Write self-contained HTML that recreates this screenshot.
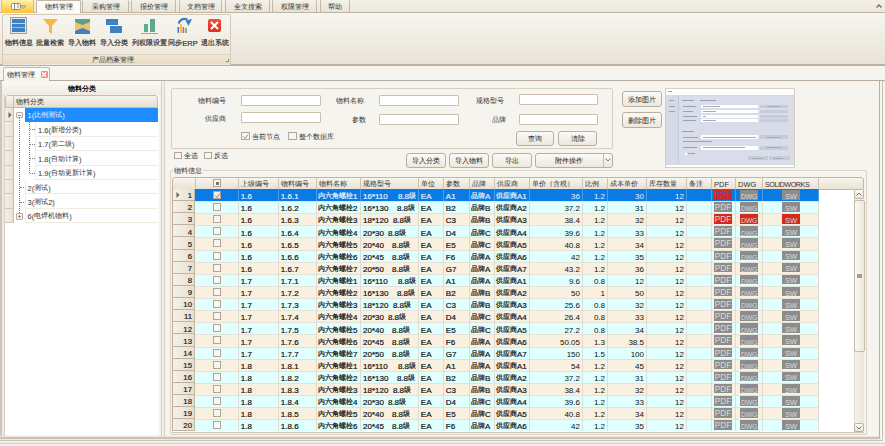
<!DOCTYPE html><html><head><meta charset="utf-8"><title>物料管理</title><style>
*{margin:0;padding:0;box-sizing:border-box}
html,body{width:885px;height:446px;overflow:hidden;background:#F6F4EF;font-family:"Liberation Sans",sans-serif;color:#222}
div{position:absolute}
svg{position:absolute}
.t{white-space:nowrap}
.z{font-size:1.333em;letter-spacing:-0.05em;line-height:0}
.g .z{font-size:1.2em}
.g,.s{-webkit-text-stroke:0.2px}
.b .z{-webkit-text-stroke:0.35px #000}
.cjk .z{font-size:0.95em;letter-spacing:0;line-height:0;position:relative;top:-1px}
.cjk .g .z{font-size:0.86em}
.cjk .b .z{-webkit-text-stroke:0}
.tab{border:1px solid #C2B6A6;border-bottom:none;border-radius:2px 2px 0 0;background:linear-gradient(#F4F1E9,#E9E3D6)}
.inp{background:#fff;border:1px solid #CDBFB0;border-radius:1px}
.btn{border:1px solid #BBAE9E;border-radius:3px;background:linear-gradient(#FBFAF6,#EDE8DC)}
.cb{width:8px;height:8px;border:1px solid #B3A595;background:#F8F6F2}
</style></head><body>
<div style="left:0px;top:0px;width:885px;height:13px;background:linear-gradient(#F3F0E8,#ECE7DB)"></div>
<div style="left:0px;top:12px;width:885px;height:1px;background:#BFB3A3"></div>
<div style="left:1px;top:0px;width:32.5px;height:12.5px;background:linear-gradient(#FDF2B0,#FFE17A 35%,#FFC43C);border-left:1px solid #CDBFA8;border-right:1px solid #C8B89A"></div>
<div style="left:11px;top:2.5px;width:9.5px;height:7.3px;background:#F4F4F4;border:1px solid #A08A50;border-radius:1.5px"></div>
<div style="left:12px;top:3.5px;width:2px;height:5.3px;background:#FFFFFF"></div>
<div style="left:14px;top:3.5px;width:1px;height:5.3px;background:#8C8C8C"></div>
<div style="left:16.5px;top:4px;width:2px;height:4.3px;background:#C8C8C8"></div>
<svg style="left:21px;top:4.5px" width="5" height="4" viewBox="0 0 5 4"><path d="M0.5 0.8H4.5L2.5 3.3Z" fill="#FFFFFF" stroke="#8A7A50" stroke-width="0.8"/></svg>
<div class="tab" style="left:36px;top:0px;width:45px;height:13px;background:#FBFAF6"></div>
<div class="t " style="left:36px;top:3.3px;line-height:10px;font-size:7.5px;color:#333;width:45px;text-align:center;"><span class="z">物料管理</span></div>
<div class="tab" style="left:82px;top:0px;width:47px;height:12px;border-top:none"></div>
<div class="t " style="left:82px;top:3.3px;line-height:10px;font-size:7.5px;color:#333;width:47px;text-align:center;"><span class="z">采购管理</span></div>
<div class="tab" style="left:131px;top:0px;width:45px;height:12px;border-top:none"></div>
<div class="t " style="left:131px;top:3.3px;line-height:10px;font-size:7.5px;color:#333;width:45px;text-align:center;"><span class="z">报价管理</span></div>
<div class="tab" style="left:179px;top:0px;width:43px;height:12px;border-top:none"></div>
<div class="t " style="left:179px;top:3.3px;line-height:10px;font-size:7.5px;color:#333;width:43px;text-align:center;"><span class="z">文档管理</span></div>
<div class="tab" style="left:225px;top:0px;width:45px;height:12px;border-top:none"></div>
<div class="t " style="left:225px;top:3.3px;line-height:10px;font-size:7.5px;color:#333;width:45px;text-align:center;"><span class="z">全文搜索</span></div>
<div class="tab" style="left:272px;top:0px;width:45px;height:12px;border-top:none"></div>
<div class="t " style="left:272px;top:3.3px;line-height:10px;font-size:7.5px;color:#333;width:45px;text-align:center;"><span class="z">权限管理</span></div>
<div class="tab" style="left:320px;top:0px;width:30px;height:12px;border-top:none"></div>
<div class="t " style="left:320px;top:3.3px;line-height:10px;font-size:7.5px;color:#333;width:30px;text-align:center;"><span class="z">帮助</span></div>
<div style="left:0px;top:13px;width:885px;height:52px;background:linear-gradient(#F7F5F0,#E9E3D6)"></div>
<div style="left:0px;top:64px;width:885px;height:1.5px;background:#BDB0A0"></div>
<div style="left:2px;top:14px;width:229px;height:51px;border:1px solid #D5CABA;border-bottom:none;border-radius:2px 2px 0 0;background:linear-gradient(#F7F5EF,#ECE7DA)"></div>
<div style="left:3px;top:54px;width:227px;height:1px;background:#DED3C2"></div>
<div style="left:3px;top:55px;width:227px;height:9px;background:linear-gradient(#F0E8D4,#E7DBC2)"></div>
<div class="t " style="left:63.4px;top:56.1px;line-height:10px;font-size:7.5px;color:#333;width:100px;text-align:center;"><span class="z">产品档案管理</span></div>
<div style="left:226px;top:59px;width:3px;height:3px;border-right:1px solid #9A8E7E;border-bottom:1px solid #9A8E7E"></div>
<div style="left:10px;top:17px;width:17px;height:17px;border:1px solid #A0A0A0;background:#E6E6E6"><div style="left:1px;top:1px;width:13px;height:13px;background:#3F7FC6"></div><div style="left:1px;top:5px;width:13px;height:1px;background:#BFD3EA"></div><div style="left:1px;top:9px;width:13px;height:1px;background:#9DBAE0"></div></div>
<svg style="left:42px;top:18px" width="17" height="17" viewBox="0 0 17 17"><path d="M1 1 H16 L10 8 V16 L7 14 V8 Z" fill="#F2B94A"/></svg>
<svg style="left:75px;top:19px" width="15" height="15" viewBox="0 0 15 15"><rect x="0" y="0" width="15" height="15" fill="#F2C264"/><path d="M0 0H15V3L7.5 6L0 3Z" fill="#5BA18D"/><path d="M0 15H15V12L7.5 9L0 12Z" fill="#3F7FC6"/></svg>
<div style="left:106px;top:19px;width:12px;height:6px;background:#3F7FC6"></div><div style="left:110px;top:26px;width:12px;height:7px;background:#3F7FC6"></div>
<div style="left:144px;top:24px;width:4px;height:8px;background:#5FA891"></div><div style="left:150px;top:19px;width:5px;height:13px;background:#5FA891"></div><div style="left:141px;top:33px;width:17px;height:1px;background:#9AA8A0"></div>
<svg style="left:176px;top:16px" width="17" height="18" viewBox="0 0 17 18"><rect x="1.5" y="11" width="1.6" height="6" fill="#3F7FC6"/><rect x="4" y="8" width="1.8" height="9" fill="#F2B94A"/><rect x="6.6" y="11" width="1.6" height="6" fill="#E0604E"/><rect x="9.2" y="12" width="1.6" height="5" fill="#5FA891"/><path d="M2.5 7.5 Q5.5 1 11.5 3.5" stroke="#3F7FC6" stroke-width="2.2" fill="none"/><path d="M9.5 4.5 L16 3 L12.5 10 Z" fill="#3F7FC6"/></svg>
<div style="left:208px;top:19px;width:13px;height:13px;background:linear-gradient(#F0503A,#D8301E);border-radius:2px"></div><svg style="left:208px;top:19px" width="13" height="13" viewBox="0 0 13 13"><path d="M3 3L10 10M10 3L3 10" stroke="#fff" stroke-width="2"/></svg>
<div class="t s" style="left:-11.2px;top:39.1px;line-height:10px;font-size:7.5px;color:#333;width:60px;text-align:center;"><span class="z">物料信息</span></div>
<div class="t s" style="left:20px;top:39.1px;line-height:10px;font-size:7.5px;color:#333;width:60px;text-align:center;"><span class="z">批量检索</span></div>
<div class="t s" style="left:52px;top:39.1px;line-height:10px;font-size:7.5px;color:#333;width:60px;text-align:center;"><span class="z">导入物料</span></div>
<div class="t s" style="left:84px;top:39.1px;line-height:10px;font-size:7.5px;color:#333;width:60px;text-align:center;"><span class="z">导入分类</span></div>
<div class="t s" style="left:119px;top:39.1px;line-height:10px;font-size:7.5px;color:#333;width:60px;text-align:center;"><span class="z">列权限设置</span></div>
<div class="t s" style="left:153px;top:39.1px;line-height:10px;font-size:7.5px;color:#333;width:60px;text-align:center;"><span class="z">同步</span>ERP</div>
<div class="t s" style="left:184.5px;top:39.1px;line-height:10px;font-size:7.5px;color:#333;width:60px;text-align:center;"><span class="z">退出系统</span></div>
<div style="left:3px;top:67px;width:47px;height:14px;border:1px solid #C3B7A7;border-bottom:none;border-radius:3px 3px 0 0;background:linear-gradient(#FDFCF9,#F4F1EA)"></div>
<div class="t " style="left:7px;top:71.3px;line-height:10px;font-size:7.5px;color:#333;"><span class="z">物料管理</span></div>
<div style="left:40.5px;top:70.5px;width:7px;height:7px;background:#F29A9A;border:1px solid #E88A8A;border-radius:1px"></div>
<svg style="left:41px;top:72px" width="6" height="5" viewBox="0 0 6 5"><path d="M1 0.5L5 4.5M5 0.5L1 4.5" stroke="#fff" stroke-width="1.2"/></svg>
<div style="left:0px;top:79.5px;width:885px;height:1.5px;background:#B9AC9C"></div>
<div style="left:4px;top:79.5px;width:45px;height:1.5px;background:#F6F3EC"></div>
<div style="left:0px;top:81px;width:1.5px;height:365px;background:#CFC5B8"></div>
<div style="left:1.5px;top:81px;width:2px;height:365px;background:#EEEAE3"></div>
<div style="left:3.5px;top:81px;width:1.5px;height:356px;background:#D9D0C4"></div>
<div style="left:878.5px;top:81px;width:1.5px;height:357px;background:#BDB0A1"></div>
<div style="left:881.5px;top:81px;width:1.5px;height:360px;background:#C9BEB0"></div>
<div style="left:0px;top:435.5px;width:879px;height:1.5px;background:#ECE8E0"></div>
<div style="left:0px;top:437px;width:880px;height:1.5px;background:#CBC1B4"></div>
<div style="left:0px;top:438.5px;width:883px;height:1.3px;background:#EEEAE3"></div>
<div style="left:0px;top:439.8px;width:883px;height:1.5px;background:#CDC3B6"></div>
<div style="left:0px;top:441.3px;width:885px;height:4.7px;background:#F3F1EC"></div>
<div style="left:0px;top:442.8px;width:885px;height:1px;background:#D8D0C4"></div>
<svg style="left:876px;top:4px" width="6" height="4" viewBox="0 0 6 4"><path d="M0.5 3.5L3 1L5.5 3.5" stroke="#7A6A5C" stroke-width="1.4" fill="none"/></svg>
<div style="left:2px;top:81px;width:159px;height:14px;background:linear-gradient(#FAF9F6,#EFEBE2)"></div>
<div class="t b" style="left:2px;top:85.1px;line-height:10px;font-size:7.5px;color:#000;width:159px;text-align:center;font-weight:bold;"><span class="z">物料分类</span></div>
<div style="left:5px;top:95px;width:154px;height:340px;background:#fff"></div>
<div style="left:161px;top:81px;width:1px;height:356px;background:#D5CCBF"></div>
<div style="left:5px;top:95px;width:153px;height:12.5px;background:linear-gradient(#F7F4EC,#E7DFCF);border:1px solid #C7BCAD;border-radius:3px 3px 0 0"></div>
<div style="left:13px;top:96px;width:1px;height:11px;background:#C7BCAD"></div>
<div class="t " style="left:16px;top:98.1px;line-height:10px;font-size:7.5px;color:#333;"><span class="z">物料分类</span></div>
<div style="left:5px;top:107.7px;width:9px;height:14.46px;background:linear-gradient(90deg,#F4F0E6,#E9E2D3);border-bottom:1px solid #D3C9B9;border-right:1px solid #C7BCAD"></div>
<div style="left:24.7px;top:107.7px;width:133.3px;height:14.46px;border-bottom:1px solid #F0ECE2;border-left:1px solid #F0ECE2;background:#1E8CFF;border-color:#1E8CFF;"></div>
<div class="t " style="left:27.5px;top:111.2px;line-height:10px;font-size:7.5px;color:#EAF3FF;">1(<span class="z">比例测试</span>)</div>
<svg style="left:8px;top:112.2px" width="4" height="6" viewBox="0 0 4 6"><path d="M0.5 0L3.5 3L0.5 6Z" fill="#6E6050"/></svg>
<div style="left:16px;top:112.1px;width:6.5px;height:6.2px;border:1px solid #B9AE9F;background:#F7F4EE;border-radius:1px"></div>
<div style="left:17.5px;top:114.7px;width:3.5px;height:1px;background:#9A8E80"></div>
<div style="left:5px;top:122.16px;width:9px;height:14.46px;background:linear-gradient(90deg,#F4F0E6,#E9E2D3);border-bottom:1px solid #D3C9B9;border-right:1px solid #C7BCAD"></div>
<div style="left:35px;top:122.16px;width:123px;height:14.46px;border-bottom:1px solid #F0ECE2;border-left:1px solid #F0ECE2;"></div>
<div class="t " style="left:38px;top:125.66px;line-height:10px;font-size:7.5px;color:#333;">1.6(<span class="z">新增分类</span>)</div>
<div style="left:5px;top:136.62px;width:9px;height:14.46px;background:linear-gradient(90deg,#F4F0E6,#E9E2D3);border-bottom:1px solid #D3C9B9;border-right:1px solid #C7BCAD"></div>
<div style="left:35px;top:136.62px;width:123px;height:14.46px;border-bottom:1px solid #F0ECE2;border-left:1px solid #F0ECE2;"></div>
<div class="t " style="left:38px;top:140.12px;line-height:10px;font-size:7.5px;color:#333;">1.7(<span class="z">第二级</span>)</div>
<div style="left:5px;top:151.08px;width:9px;height:14.46px;background:linear-gradient(90deg,#F4F0E6,#E9E2D3);border-bottom:1px solid #D3C9B9;border-right:1px solid #C7BCAD"></div>
<div style="left:35px;top:151.08px;width:123px;height:14.46px;border-bottom:1px solid #F0ECE2;border-left:1px solid #F0ECE2;"></div>
<div class="t " style="left:38px;top:154.58px;line-height:10px;font-size:7.5px;color:#333;">1.8(<span class="z">自动计算</span>)</div>
<div style="left:5px;top:165.54px;width:9px;height:14.46px;background:linear-gradient(90deg,#F4F0E6,#E9E2D3);border-bottom:1px solid #D3C9B9;border-right:1px solid #C7BCAD"></div>
<div style="left:35px;top:165.54px;width:123px;height:14.46px;border-bottom:1px solid #F0ECE2;border-left:1px solid #F0ECE2;"></div>
<div class="t " style="left:38px;top:169.04px;line-height:10px;font-size:7.5px;color:#333;">1.9(<span class="z">自动更新计算</span>)</div>
<div style="left:5px;top:180px;width:9px;height:14.46px;background:linear-gradient(90deg,#F4F0E6,#E9E2D3);border-bottom:1px solid #D3C9B9;border-right:1px solid #C7BCAD"></div>
<div style="left:24.7px;top:180px;width:133.3px;height:14.46px;border-bottom:1px solid #F0ECE2;border-left:1px solid #F0ECE2;"></div>
<div class="t " style="left:27.5px;top:183.5px;line-height:10px;font-size:7.5px;color:#333;">2(<span class="z">测试</span>)</div>
<div style="left:5px;top:194.46px;width:9px;height:14.46px;background:linear-gradient(90deg,#F4F0E6,#E9E2D3);border-bottom:1px solid #D3C9B9;border-right:1px solid #C7BCAD"></div>
<div style="left:24.7px;top:194.46px;width:133.3px;height:14.46px;border-bottom:1px solid #F0ECE2;border-left:1px solid #F0ECE2;"></div>
<div class="t " style="left:27.5px;top:197.96px;line-height:10px;font-size:7.5px;color:#333;">3(<span class="z">测试</span>2)</div>
<div style="left:5px;top:208.92px;width:9px;height:14.46px;background:linear-gradient(90deg,#F4F0E6,#E9E2D3);border-bottom:1px solid #D3C9B9;border-right:1px solid #C7BCAD"></div>
<div style="left:24.7px;top:208.92px;width:133.3px;height:14.46px;border-bottom:1px solid #F0ECE2;border-left:1px solid #F0ECE2;"></div>
<div class="t " style="left:27.5px;top:212.42px;line-height:10px;font-size:7.5px;color:#333;">6(<span class="z">电焊机物料</span>)</div>
<div style="left:16px;top:213.32px;width:6.5px;height:6.2px;border:1px solid #B9AE9F;background:#F7F4EE;border-radius:1px"></div>
<div style="left:17.5px;top:215.92px;width:3.5px;height:1px;background:#9A8E80"></div>
<div style="left:18.7px;top:214.72px;width:1px;height:3.4px;background:#9A8E80"></div>
<div style="left:19px;top:118.43px;width:1px;height:94.72px;border-left:1px dotted #7A7A7A"></div>
<div style="left:29px;top:122.16px;width:1px;height:50.61px;border-left:1px dotted #7A7A7A"></div>
<div style="left:30px;top:129.39px;width:4.5px;height:1px;border-top:1px dotted #7A7A7A"></div>
<div style="left:30px;top:143.85px;width:4.5px;height:1px;border-top:1px dotted #7A7A7A"></div>
<div style="left:30px;top:158.31px;width:4.5px;height:1px;border-top:1px dotted #7A7A7A"></div>
<div style="left:30px;top:172.77px;width:4.5px;height:1px;border-top:1px dotted #7A7A7A"></div>
<div style="left:20px;top:187.23px;width:4px;height:1px;border-top:1px dotted #7A7A7A"></div>
<div style="left:20px;top:201.69px;width:4px;height:1px;border-top:1px dotted #7A7A7A"></div>
<div style="left:162px;top:81px;width:3px;height:356px;background:#F3F0EA;border-right:1px solid #D8D0C3"></div>
<div style="left:171px;top:88px;width:442px;height:61px;border:1px solid #D9CFC1;border-radius:2px"></div>
<div class="t " style="left:145.5px;top:96.8px;line-height:10px;font-size:7.5px;color:#333;width:80px;text-align:right;"><span class="z">物料编号</span></div>
<div class="inp" style="left:241px;top:94.5px;width:80px;height:11.5px;"></div>
<div class="t " style="left:146px;top:114.8px;line-height:10px;font-size:7.5px;color:#333;width:80px;text-align:right;"><span class="z">供应商</span></div>
<div class="inp" style="left:241px;top:111.5px;width:80px;height:11.5px;"></div>
<div class="t " style="left:283.5px;top:96.8px;line-height:10px;font-size:7.5px;color:#333;width:80px;text-align:right;"><span class="z">物料名称</span></div>
<div class="inp" style="left:379px;top:94.5px;width:80px;height:11.5px;"></div>
<div class="t " style="left:286px;top:115.8px;line-height:10px;font-size:7.5px;color:#333;width:80px;text-align:right;"><span class="z">参数</span></div>
<div class="inp" style="left:379px;top:113.5px;width:80px;height:11px;"></div>
<div class="t " style="left:423.5px;top:96.8px;line-height:10px;font-size:7.5px;color:#333;width:80px;text-align:right;"><span class="z">规格型号</span></div>
<div class="inp" style="left:519px;top:93.7px;width:79px;height:11.3px;"></div>
<div class="t " style="left:426px;top:115.8px;line-height:10px;font-size:7.5px;color:#333;width:80px;text-align:right;"><span class="z">品牌</span></div>
<div class="inp" style="left:519px;top:113.5px;width:79px;height:11px;"></div>
<div class="cb" style="left:241px;top:132px;width:9px;height:8px;"></div>
<svg style="left:242px;top:133px" width="7" height="7" viewBox="0 0 7 7"><path d="M1 3.5L3 5.5L6 1.5" stroke="#9C8F80" stroke-width="1" fill="none"/></svg>
<div class="t " style="left:252px;top:132.8px;line-height:10px;font-size:7.5px;color:#333;"><span class="z">当前节点</span></div>
<div class="cb" style="left:288px;top:132px;width:9px;height:8px;"></div>
<div class="t " style="left:299px;top:132.8px;line-height:10px;font-size:7.5px;color:#333;"><span class="z">整个数据库</span></div>
<div class="btn" style="left:516px;top:131px;width:38px;height:15px;"></div>
<div class="t " style="left:516px;top:135.3px;line-height:10px;font-size:7.5px;color:#222;width:38px;text-align:center;"><span class="z">查询</span></div>
<div class="btn" style="left:558px;top:131px;width:39px;height:15px;"></div>
<div class="t " style="left:558px;top:135.3px;line-height:10px;font-size:7.5px;color:#222;width:39px;text-align:center;"><span class="z">清除</span></div>
<div class="btn" style="left:622px;top:91px;width:40px;height:15.5px;"></div>
<div class="t " style="left:622px;top:95.6px;line-height:10px;font-size:7.5px;color:#222;width:40px;text-align:center;"><span class="z">添加图片</span></div>
<div class="btn" style="left:622px;top:112px;width:40px;height:15.5px;"></div>
<div class="t " style="left:622px;top:116.6px;line-height:10px;font-size:7.5px;color:#222;width:40px;text-align:center;"><span class="z">删除图片</span></div>
<div class="cb" style="left:174px;top:152px;width:8px;height:7px;"></div>
<div class="t " style="left:184px;top:152.3px;line-height:10px;font-size:7.5px;color:#333;"><span class="z">全选</span></div>
<div class="cb" style="left:204px;top:152px;width:8px;height:7px;"></div>
<div class="t " style="left:214px;top:152.3px;line-height:10px;font-size:7.5px;color:#333;"><span class="z">反选</span></div>
<div class="btn" style="left:405.5px;top:152.5px;width:40px;height:15.5px;"></div>
<div class="t " style="left:405.5px;top:156.8px;line-height:10px;font-size:7.5px;color:#222;width:40px;text-align:center;"><span class="z">导入分类</span></div>
<div class="btn" style="left:448.5px;top:152.5px;width:40.5px;height:15.5px;"></div>
<div class="t " style="left:448.5px;top:156.8px;line-height:10px;font-size:7.5px;color:#222;width:40.5px;text-align:center;"><span class="z">导入物料</span></div>
<div class="btn" style="left:492px;top:152.5px;width:40px;height:15.5px;"></div>
<div class="t " style="left:492px;top:156.8px;line-height:10px;font-size:7.5px;color:#222;width:40px;text-align:center;"><span class="z">导出</span></div>
<div class="btn" style="left:535px;top:152.5px;width:78px;height:15.5px;"></div>
<div class="t " style="left:535px;top:156.8px;line-height:10px;font-size:7.5px;color:#222;width:68px;text-align:center;"><span class="z">附件操作</span></div>
<div style="left:602.5px;top:153.5px;width:1px;height:13.5px;background:#C9BDAE"></div>
<svg style="left:605px;top:158px" width="6" height="4" viewBox="0 0 6 4"><path d="M0.5 0.5L3 3L5.5 0.5" stroke="#777" fill="none"/></svg>
<div style="left:665px;top:88px;width:130px;height:80px;background:#FDFDFD;border:1px solid #D8CDBE"></div>
<div style="left:666px;top:95px;width:128px;height:70px;background:#D5DAE6"></div>
<div style="left:678px;top:96px;width:115px;height:68px;background:#D8DDE9;border-left:1px solid #C5CBD9"></div>
<div style="left:668px;top:91px;width:4px;height:1.3px;background:#9AA1B2"></div>
<div style="left:669px;top:100px;width:5px;height:1.3px;background:#9AA1B2"></div>
<div style="left:669px;top:105.5px;width:6px;height:1.3px;background:#9AA1B2"></div>
<div style="left:669px;top:111px;width:6px;height:1.3px;background:#9AA1B2"></div>
<div style="left:682px;top:100px;width:12px;height:1.3px;background:#9AA1B2"></div>
<div style="left:700px;top:100px;width:16px;height:1.3px;background:#9AA1B2"></div>
<div style="left:683px;top:106px;width:13px;height:1.3px;background:#9AA1B2"></div>
<div style="left:683px;top:111px;width:10px;height:1.3px;background:#9AA1B2"></div>
<div style="left:683px;top:115.5px;width:14px;height:1.3px;background:#9AA1B2"></div>
<div style="left:683px;top:120px;width:13px;height:1.3px;background:#9AA1B2"></div>
<div style="left:682px;top:130.5px;width:12px;height:1.3px;background:#9AA1B2"></div>
<div style="left:683px;top:136.5px;width:15px;height:1.3px;background:#9AA1B2"></div>
<div style="left:683px;top:141px;width:29px;height:1.3px;background:#9AA1B2"></div>
<div style="left:683px;top:147px;width:14px;height:1.3px;background:#9AA1B2"></div>
<div style="left:688px;top:153px;width:7px;height:1.3px;background:#9AA1B2"></div>
<div style="left:700.8px;top:104.8px;width:57.5px;height:3.7px;background:#FFFFFF"></div>
<div style="left:700.8px;top:110px;width:57.5px;height:3.2px;background:#FFFFFF"></div>
<div style="left:700.8px;top:114.6px;width:57.5px;height:3px;background:#FFFFFF"></div>
<div style="left:700.8px;top:118.6px;width:57.5px;height:3.4px;background:#FFFFFF"></div>
<div style="left:700.8px;top:135px;width:57.5px;height:4px;background:#FFFFFF"></div>
<div style="left:700.8px;top:145.5px;width:57.5px;height:4.1px;background:#FFFFFF"></div>
<div style="left:759.5px;top:104.8px;width:28.1px;height:3.7px;background:#C6CCDA"></div>
<div style="left:759.5px;top:110px;width:28.1px;height:3.2px;background:#C6CCDA"></div>
<div style="left:759.5px;top:114.6px;width:28.1px;height:3px;background:#C6CCDA"></div>
<div style="left:759.5px;top:118.6px;width:28.1px;height:3.4px;background:#C6CCDA"></div>
<div style="left:759.5px;top:135px;width:28.1px;height:4px;background:#C6CCDA"></div>
<div style="left:759.5px;top:145.5px;width:28.1px;height:4.1px;background:#C6CCDA"></div>
<div style="left:747.5px;top:156.3px;width:20.4px;height:4px;background:#C6CCDA"></div>
<div style="left:768.9px;top:156.3px;width:20.7px;height:4px;background:#C6CCDA"></div>
<div style="left:703px;top:106px;width:17px;height:1.2px;background:#A6ACBC"></div>
<div style="left:703px;top:111px;width:13px;height:1.2px;background:#A6ACBC"></div>
<div style="left:703px;top:115.5px;width:3px;height:1.2px;background:#A6ACBC"></div>
<div style="left:703px;top:120px;width:13px;height:1.2px;background:#A6ACBC"></div>
<div style="left:703px;top:136.5px;width:53px;height:1.2px;background:#A6ACBC"></div>
<div style="left:703px;top:147px;width:42px;height:1.2px;background:#A6ACBC"></div>
<div style="left:767px;top:106px;width:13px;height:1.2px;background:#A6ACBC"></div>
<div style="left:766px;top:136.5px;width:15px;height:1.2px;background:#A6ACBC"></div>
<div style="left:766px;top:147px;width:15px;height:1.2px;background:#A6ACBC"></div>
<div style="left:752px;top:157.8px;width:11px;height:1.2px;background:#A6ACBC"></div>
<div style="left:773px;top:157.8px;width:10px;height:1.2px;background:#A6ACBC"></div>
<div style="left:685px;top:152.5px;width:2px;height:2px;background:#FFFFFF"></div>
<div style="left:170px;top:170px;width:697px;height:265px;border:1px solid #DCD3C6;border-radius:2px"></div>
<div class="t " style="left:173px;top:167.1px;line-height:10px;font-size:7.5px;color:#333;padding:0 1px;background:#F6F4EF;"><span class="z">物料信息</span></div>
<div style="left:172px;top:177px;width:692px;height:255px;background:#fff"></div>
<div style="left:172px;top:177px;width:692px;height:12.5px;background:linear-gradient(#F8F5EE,#E9E2D3);border:1px solid #C2B5A4;border-radius:3px 3px 0 0"></div>
<div style="left:195px;top:178px;width:1px;height:11px;background:#CFC4B4"></div>
<div style="left:238px;top:178px;width:1px;height:11px;background:#CFC4B4"></div>
<div style="left:278px;top:178px;width:1px;height:11px;background:#CFC4B4"></div>
<div style="left:316px;top:178px;width:1px;height:11px;background:#CFC4B4"></div>
<div style="left:360px;top:178px;width:1px;height:11px;background:#CFC4B4"></div>
<div style="left:418px;top:178px;width:1px;height:11px;background:#CFC4B4"></div>
<div style="left:443px;top:178px;width:1px;height:11px;background:#CFC4B4"></div>
<div style="left:469px;top:178px;width:1px;height:11px;background:#CFC4B4"></div>
<div style="left:494px;top:178px;width:1px;height:11px;background:#CFC4B4"></div>
<div style="left:529px;top:178px;width:1px;height:11px;background:#CFC4B4"></div>
<div style="left:582px;top:178px;width:1px;height:11px;background:#CFC4B4"></div>
<div style="left:607px;top:178px;width:1px;height:11px;background:#CFC4B4"></div>
<div style="left:646px;top:178px;width:1px;height:11px;background:#CFC4B4"></div>
<div style="left:686px;top:178px;width:1px;height:11px;background:#CFC4B4"></div>
<div style="left:711px;top:178px;width:1px;height:11px;background:#CFC4B4"></div>
<div style="left:735px;top:178px;width:1px;height:11px;background:#CFC4B4"></div>
<div style="left:762px;top:178px;width:1px;height:11px;background:#CFC4B4"></div>
<div style="left:818px;top:178px;width:1px;height:11px;background:#CFC4B4"></div>
<div class="t " style="left:241px;top:180.1px;line-height:10px;font-size:7.5px;color:#333;"><span class="z">上级编号</span></div>
<div class="t " style="left:281px;top:180.1px;line-height:10px;font-size:7.5px;color:#333;"><span class="z">物料编号</span></div>
<div class="t " style="left:319px;top:180.1px;line-height:10px;font-size:7.5px;color:#333;"><span class="z">物料名称</span></div>
<div class="t " style="left:363px;top:180.1px;line-height:10px;font-size:7.5px;color:#333;"><span class="z">规格型号</span></div>
<div class="t " style="left:421px;top:180.1px;line-height:10px;font-size:7.5px;color:#333;"><span class="z">单位</span></div>
<div class="t " style="left:446px;top:180.1px;line-height:10px;font-size:7.5px;color:#333;"><span class="z">参数</span></div>
<div class="t " style="left:472px;top:180.1px;line-height:10px;font-size:7.5px;color:#333;"><span class="z">品牌</span></div>
<div class="t " style="left:497px;top:180.1px;line-height:10px;font-size:7.5px;color:#333;"><span class="z">供应商</span></div>
<div class="t " style="left:532px;top:180.1px;line-height:10px;font-size:7.5px;color:#333;"><span class="z">单价（含税）</span></div>
<div class="t " style="left:585px;top:180.1px;line-height:10px;font-size:7.5px;color:#333;"><span class="z">比例</span></div>
<div class="t " style="left:610px;top:180.1px;line-height:10px;font-size:7.5px;color:#333;"><span class="z">成本单价</span></div>
<div class="t " style="left:649px;top:180.1px;line-height:10px;font-size:7.5px;color:#333;"><span class="z">库存数量</span></div>
<div class="t " style="left:689px;top:180.1px;line-height:10px;font-size:7.5px;color:#333;"><span class="z">备注</span></div>
<div class="t " style="left:714px;top:180.1px;line-height:10px;font-size:7.5px;color:#333;">PDF</div>
<div class="t " style="left:738px;top:180.1px;line-height:10px;font-size:7.5px;color:#333;">DWG</div>
<div class="t " style="left:765px;top:180.1px;line-height:10px;font-size:7.2px;color:#333;letter-spacing:-0.45px;">SOLIDWORKS</div>
<div class="cb" style="left:213px;top:179px;width:8px;height:8px;"></div>
<div style="left:215.5px;top:181.5px;width:3px;height:3px;background:#8C6E5E"></div>
<div style="left:172px;top:189px;width:23px;height:12.12px;background:linear-gradient(90deg,#F5F1E8,#E8E0D0);border-left:1px solid #B8AB9C;border-bottom:1px solid #BFB2A2;border-right:1px solid #C2B5A4"></div>
<div class="t s" style="left:172px;top:191.2px;line-height:10px;font-size:7.8px;color:#222;width:20px;text-align:right;">1</div>
<svg style="left:176px;top:192.2px" width="4" height="6" viewBox="0 0 4 6"><path d="M0.5 0L3.5 3L0.5 6Z" fill="#6E6050"/></svg>
<div style="left:195px;top:189px;width:623px;height:12.12px;background:#0A7AE4;border-top:1px solid #0A7AE4"></div>
<div style="left:317px;top:189px;width:44px;height:12.12px;background:#0A7AE4"></div>
<div style="left:238px;top:189px;width:1px;height:12.12px;background:#4A9EEC"></div>
<div style="left:278px;top:189px;width:1px;height:12.12px;background:#4A9EEC"></div>
<div style="left:316px;top:189px;width:1px;height:12.12px;background:#4A9EEC"></div>
<div style="left:360px;top:189px;width:1px;height:12.12px;background:#4A9EEC"></div>
<div style="left:418px;top:189px;width:1px;height:12.12px;background:#4A9EEC"></div>
<div style="left:443px;top:189px;width:1px;height:12.12px;background:#4A9EEC"></div>
<div style="left:469px;top:189px;width:1px;height:12.12px;background:#4A9EEC"></div>
<div style="left:494px;top:189px;width:1px;height:12.12px;background:#4A9EEC"></div>
<div style="left:529px;top:189px;width:1px;height:12.12px;background:#4A9EEC"></div>
<div style="left:582px;top:189px;width:1px;height:12.12px;background:#4A9EEC"></div>
<div style="left:607px;top:189px;width:1px;height:12.12px;background:#4A9EEC"></div>
<div style="left:646px;top:189px;width:1px;height:12.12px;background:#4A9EEC"></div>
<div style="left:686px;top:189px;width:1px;height:12.12px;background:#4A9EEC"></div>
<div style="left:711px;top:189px;width:1px;height:12.12px;background:#4A9EEC"></div>
<div style="left:735px;top:189px;width:1px;height:12.12px;background:#4A9EEC"></div>
<div style="left:762px;top:189px;width:1px;height:12.12px;background:#4A9EEC"></div>
<div style="left:818px;top:189px;width:1px;height:12.12px;background:#4A9EEC"></div>
<div class="cb" style="left:213px;top:191px;width:8px;height:8px;background:#F4F0EA"></div>
<svg style="left:214px;top:192px" width="7" height="7" viewBox="0 0 7 7"><path d="M1 3.5L3 5.5L6 1.5" stroke="#8C7E6E" stroke-width="1" fill="none"/></svg>
<div class="t g" style="left:240.8px;top:192.2px;line-height:10px;font-size:8px;color:#E6F0FF;">1.6</div>
<div class="t g" style="left:280.8px;top:192.2px;line-height:10px;font-size:8px;color:#E6F0FF;">1.6.1</div>
<div class="t g" style="left:318px;top:192.2px;line-height:10px;font-size:8px;color:#E6F0FF;"><span class="z">内六角螺栓</span>1</div>
<div class="t g" style="left:420.8px;top:192.2px;line-height:10px;font-size:8px;color:#E6F0FF;">EA</div>
<div class="t g" style="left:445.8px;top:192.2px;line-height:10px;font-size:8px;color:#E6F0FF;">A1</div>
<div class="t g" style="left:471px;top:192.2px;line-height:10px;font-size:8px;color:#E6F0FF;"><span class="z">品牌</span>A</div>
<div class="t g" style="left:496px;top:192.2px;line-height:10px;font-size:8px;color:#E6F0FF;"><span class="z">供应商</span>A1</div>
<div class="t g" style="left:363px;top:192.2px;line-height:10px;font-size:8px;color:#E6F0FF;">16*110</div>
<div class="t g" style="left:379px;top:192.2px;line-height:10px;font-size:8px;color:#E6F0FF;width:37px;text-align:right;">8.8<span class="z">级</span></div>
<div class="t " style="left:540px;top:192.2px;line-height:10px;font-size:8px;color:#E6F0FF;width:40px;text-align:right;">36</div>
<div class="t " style="left:565px;top:192.2px;line-height:10px;font-size:8px;color:#E6F0FF;width:40px;text-align:right;">1.2</div>
<div class="t " style="left:604px;top:192.2px;line-height:10px;font-size:8px;color:#E6F0FF;width:40px;text-align:right;">30</div>
<div class="t " style="left:644px;top:192.2px;line-height:10px;font-size:8px;color:#E6F0FF;width:40px;text-align:right;">12</div>
<div style="left:714px;top:190px;width:18px;height:9.5px;background:#D8281A"></div>
<div class="t " style="left:713px;top:191px;line-height:10px;font-size:8.2px;color:#4A58C0;width:20px;text-align:center;">PDF</div>
<div style="left:740px;top:190px;width:18px;height:9.5px;background:#8C8C8C"></div>
<div class="t " style="left:737px;top:192.2px;line-height:10px;font-size:6.8px;color:#D8D8D8;width:24px;text-align:center;letter-spacing:-0.2px;">DWG</div>
<div style="left:782px;top:190px;width:18px;height:9.5px;background:#8C8C8C"></div>
<div class="t " style="left:782px;top:191.6px;line-height:10px;font-size:7.5px;color:#DCDCDC;width:18px;text-align:center;">SW</div>
<div style="left:172px;top:201.12px;width:23px;height:12.12px;background:linear-gradient(90deg,#F5F1E8,#E8E0D0);border-left:1px solid #B8AB9C;border-bottom:1px solid #BFB2A2;border-right:1px solid #C2B5A4"></div>
<div class="t s" style="left:172px;top:203.32px;line-height:10px;font-size:7.8px;color:#222;width:20px;text-align:right;">2</div>
<div style="left:195px;top:201.12px;width:623px;height:12.12px;background:#E0FFFF;border-top:1px solid #E6E2DA"></div>
<div style="left:238px;top:201.12px;width:1px;height:12.12px;background:#E0DCD4"></div>
<div style="left:278px;top:201.12px;width:1px;height:12.12px;background:#E0DCD4"></div>
<div style="left:316px;top:201.12px;width:1px;height:12.12px;background:#E0DCD4"></div>
<div style="left:360px;top:201.12px;width:1px;height:12.12px;background:#E0DCD4"></div>
<div style="left:418px;top:201.12px;width:1px;height:12.12px;background:#E0DCD4"></div>
<div style="left:443px;top:201.12px;width:1px;height:12.12px;background:#E0DCD4"></div>
<div style="left:469px;top:201.12px;width:1px;height:12.12px;background:#E0DCD4"></div>
<div style="left:494px;top:201.12px;width:1px;height:12.12px;background:#E0DCD4"></div>
<div style="left:529px;top:201.12px;width:1px;height:12.12px;background:#E0DCD4"></div>
<div style="left:582px;top:201.12px;width:1px;height:12.12px;background:#E0DCD4"></div>
<div style="left:607px;top:201.12px;width:1px;height:12.12px;background:#E0DCD4"></div>
<div style="left:646px;top:201.12px;width:1px;height:12.12px;background:#E0DCD4"></div>
<div style="left:686px;top:201.12px;width:1px;height:12.12px;background:#E0DCD4"></div>
<div style="left:711px;top:201.12px;width:1px;height:12.12px;background:#E0DCD4"></div>
<div style="left:735px;top:201.12px;width:1px;height:12.12px;background:#E0DCD4"></div>
<div style="left:762px;top:201.12px;width:1px;height:12.12px;background:#E0DCD4"></div>
<div style="left:818px;top:201.12px;width:1px;height:12.12px;background:#E0DCD4"></div>
<div class="cb" style="left:213px;top:203.12px;width:8px;height:8px;"></div>
<div class="t g" style="left:240.8px;top:204.32px;line-height:10px;font-size:8px;color:#111;">1.6</div>
<div class="t g" style="left:280.8px;top:204.32px;line-height:10px;font-size:8px;color:#111;">1.6.2</div>
<div class="t g" style="left:318px;top:204.32px;line-height:10px;font-size:8px;color:#111;"><span class="z">内六角螺栓</span>2</div>
<div class="t g" style="left:420.8px;top:204.32px;line-height:10px;font-size:8px;color:#111;">EA</div>
<div class="t g" style="left:445.8px;top:204.32px;line-height:10px;font-size:8px;color:#111;">B2</div>
<div class="t g" style="left:471px;top:204.32px;line-height:10px;font-size:8px;color:#111;"><span class="z">品牌</span>B</div>
<div class="t g" style="left:496px;top:204.32px;line-height:10px;font-size:8px;color:#111;"><span class="z">供应商</span>A2</div>
<div class="t g" style="left:363px;top:204.32px;line-height:10px;font-size:8px;color:#111;">16*130</div>
<div class="t g" style="left:378px;top:204.32px;line-height:10px;font-size:8px;color:#111;width:37px;text-align:right;">8.8<span class="z">级</span></div>
<div class="t " style="left:540px;top:204.32px;line-height:10px;font-size:8px;color:#111;width:40px;text-align:right;">37.2</div>
<div class="t " style="left:565px;top:204.32px;line-height:10px;font-size:8px;color:#111;width:40px;text-align:right;">1.2</div>
<div class="t " style="left:604px;top:204.32px;line-height:10px;font-size:8px;color:#111;width:40px;text-align:right;">31</div>
<div class="t " style="left:644px;top:204.32px;line-height:10px;font-size:8px;color:#111;width:40px;text-align:right;">12</div>
<div style="left:714px;top:202.12px;width:18px;height:9.5px;background:#8C8C8C"></div>
<div class="t " style="left:713px;top:203.12px;line-height:10px;font-size:8.2px;color:#DCDCDC;width:20px;text-align:center;">PDF</div>
<div style="left:740px;top:202.12px;width:18px;height:9.5px;background:#8C8C8C"></div>
<div class="t " style="left:737px;top:204.32px;line-height:10px;font-size:6.8px;color:#D8D8D8;width:24px;text-align:center;letter-spacing:-0.2px;">DWG</div>
<div style="left:782px;top:202.12px;width:18px;height:9.5px;background:#8C8C8C"></div>
<div class="t " style="left:782px;top:203.72px;line-height:10px;font-size:7.5px;color:#DCDCDC;width:18px;text-align:center;">SW</div>
<div style="left:172px;top:213.24px;width:23px;height:12.12px;background:linear-gradient(90deg,#F5F1E8,#E8E0D0);border-left:1px solid #B8AB9C;border-bottom:1px solid #BFB2A2;border-right:1px solid #C2B5A4"></div>
<div class="t s" style="left:172px;top:215.44px;line-height:10px;font-size:7.8px;color:#222;width:20px;text-align:right;">3</div>
<div style="left:195px;top:213.24px;width:623px;height:12.12px;background:#FAF0DF;border-top:1px solid #E6E2DA"></div>
<div style="left:238px;top:213.24px;width:1px;height:12.12px;background:#E0DCD4"></div>
<div style="left:278px;top:213.24px;width:1px;height:12.12px;background:#E0DCD4"></div>
<div style="left:316px;top:213.24px;width:1px;height:12.12px;background:#E0DCD4"></div>
<div style="left:360px;top:213.24px;width:1px;height:12.12px;background:#E0DCD4"></div>
<div style="left:418px;top:213.24px;width:1px;height:12.12px;background:#E0DCD4"></div>
<div style="left:443px;top:213.24px;width:1px;height:12.12px;background:#E0DCD4"></div>
<div style="left:469px;top:213.24px;width:1px;height:12.12px;background:#E0DCD4"></div>
<div style="left:494px;top:213.24px;width:1px;height:12.12px;background:#E0DCD4"></div>
<div style="left:529px;top:213.24px;width:1px;height:12.12px;background:#E0DCD4"></div>
<div style="left:582px;top:213.24px;width:1px;height:12.12px;background:#E0DCD4"></div>
<div style="left:607px;top:213.24px;width:1px;height:12.12px;background:#E0DCD4"></div>
<div style="left:646px;top:213.24px;width:1px;height:12.12px;background:#E0DCD4"></div>
<div style="left:686px;top:213.24px;width:1px;height:12.12px;background:#E0DCD4"></div>
<div style="left:711px;top:213.24px;width:1px;height:12.12px;background:#E0DCD4"></div>
<div style="left:735px;top:213.24px;width:1px;height:12.12px;background:#E0DCD4"></div>
<div style="left:762px;top:213.24px;width:1px;height:12.12px;background:#E0DCD4"></div>
<div style="left:818px;top:213.24px;width:1px;height:12.12px;background:#E0DCD4"></div>
<div class="cb" style="left:213px;top:215.24px;width:8px;height:8px;"></div>
<div class="t g" style="left:240.8px;top:216.44px;line-height:10px;font-size:8px;color:#111;">1.6</div>
<div class="t g" style="left:280.8px;top:216.44px;line-height:10px;font-size:8px;color:#111;">1.6.3</div>
<div class="t g" style="left:318px;top:216.44px;line-height:10px;font-size:8px;color:#111;"><span class="z">内六角螺栓</span>3</div>
<div class="t g" style="left:420.8px;top:216.44px;line-height:10px;font-size:8px;color:#111;">EA</div>
<div class="t g" style="left:445.8px;top:216.44px;line-height:10px;font-size:8px;color:#111;">C3</div>
<div class="t g" style="left:471px;top:216.44px;line-height:10px;font-size:8px;color:#111;"><span class="z">品牌</span>B</div>
<div class="t g" style="left:496px;top:216.44px;line-height:10px;font-size:8px;color:#111;"><span class="z">供应商</span>A3</div>
<div class="t g" style="left:363px;top:216.44px;line-height:10px;font-size:8px;color:#111;">18*120</div>
<div class="t g" style="left:374px;top:216.44px;line-height:10px;font-size:8px;color:#111;width:37px;text-align:right;">8.8<span class="z">级</span></div>
<div class="t " style="left:540px;top:216.44px;line-height:10px;font-size:8px;color:#111;width:40px;text-align:right;">38.4</div>
<div class="t " style="left:565px;top:216.44px;line-height:10px;font-size:8px;color:#111;width:40px;text-align:right;">1.2</div>
<div class="t " style="left:604px;top:216.44px;line-height:10px;font-size:8px;color:#111;width:40px;text-align:right;">32</div>
<div class="t " style="left:644px;top:216.44px;line-height:10px;font-size:8px;color:#111;width:40px;text-align:right;">12</div>
<div style="left:714px;top:214.24px;width:18px;height:9.5px;background:#D8281A"></div>
<div class="t " style="left:713px;top:215.24px;line-height:10px;font-size:8.2px;color:#DCDCDC;width:20px;text-align:center;">PDF</div>
<div style="left:740px;top:214.24px;width:18px;height:9.5px;background:#D8281A"></div>
<div class="t " style="left:737px;top:216.44px;line-height:10px;font-size:6.8px;color:#D8D8D8;width:24px;text-align:center;letter-spacing:-0.2px;">DWG</div>
<div style="left:782px;top:214.24px;width:18px;height:9.5px;background:#D8281A"></div>
<div class="t " style="left:782px;top:215.84px;line-height:10px;font-size:7.5px;color:#DCDCDC;width:18px;text-align:center;">SW</div>
<div style="left:172px;top:225.36px;width:23px;height:12.12px;background:linear-gradient(90deg,#F5F1E8,#E8E0D0);border-left:1px solid #B8AB9C;border-bottom:1px solid #BFB2A2;border-right:1px solid #C2B5A4"></div>
<div class="t s" style="left:172px;top:227.56px;line-height:10px;font-size:7.8px;color:#222;width:20px;text-align:right;">4</div>
<div style="left:195px;top:225.36px;width:623px;height:12.12px;background:#E0FFFF;border-top:1px solid #E6E2DA"></div>
<div style="left:238px;top:225.36px;width:1px;height:12.12px;background:#E0DCD4"></div>
<div style="left:278px;top:225.36px;width:1px;height:12.12px;background:#E0DCD4"></div>
<div style="left:316px;top:225.36px;width:1px;height:12.12px;background:#E0DCD4"></div>
<div style="left:360px;top:225.36px;width:1px;height:12.12px;background:#E0DCD4"></div>
<div style="left:418px;top:225.36px;width:1px;height:12.12px;background:#E0DCD4"></div>
<div style="left:443px;top:225.36px;width:1px;height:12.12px;background:#E0DCD4"></div>
<div style="left:469px;top:225.36px;width:1px;height:12.12px;background:#E0DCD4"></div>
<div style="left:494px;top:225.36px;width:1px;height:12.12px;background:#E0DCD4"></div>
<div style="left:529px;top:225.36px;width:1px;height:12.12px;background:#E0DCD4"></div>
<div style="left:582px;top:225.36px;width:1px;height:12.12px;background:#E0DCD4"></div>
<div style="left:607px;top:225.36px;width:1px;height:12.12px;background:#E0DCD4"></div>
<div style="left:646px;top:225.36px;width:1px;height:12.12px;background:#E0DCD4"></div>
<div style="left:686px;top:225.36px;width:1px;height:12.12px;background:#E0DCD4"></div>
<div style="left:711px;top:225.36px;width:1px;height:12.12px;background:#E0DCD4"></div>
<div style="left:735px;top:225.36px;width:1px;height:12.12px;background:#E0DCD4"></div>
<div style="left:762px;top:225.36px;width:1px;height:12.12px;background:#E0DCD4"></div>
<div style="left:818px;top:225.36px;width:1px;height:12.12px;background:#E0DCD4"></div>
<div class="cb" style="left:213px;top:227.36px;width:8px;height:8px;"></div>
<div class="t g" style="left:240.8px;top:228.56px;line-height:10px;font-size:8px;color:#111;">1.6</div>
<div class="t g" style="left:280.8px;top:228.56px;line-height:10px;font-size:8px;color:#111;">1.6.4</div>
<div class="t g" style="left:318px;top:228.56px;line-height:10px;font-size:8px;color:#111;"><span class="z">内六角螺栓</span>4</div>
<div class="t g" style="left:420.8px;top:228.56px;line-height:10px;font-size:8px;color:#111;">EA</div>
<div class="t g" style="left:445.8px;top:228.56px;line-height:10px;font-size:8px;color:#111;">D4</div>
<div class="t g" style="left:471px;top:228.56px;line-height:10px;font-size:8px;color:#111;"><span class="z">品牌</span>C</div>
<div class="t g" style="left:496px;top:228.56px;line-height:10px;font-size:8px;color:#111;"><span class="z">供应商</span>A4</div>
<div class="t g" style="left:363px;top:228.56px;line-height:10px;font-size:8px;color:#111;">20*30</div>
<div class="t g" style="left:369px;top:228.56px;line-height:10px;font-size:8px;color:#111;width:37px;text-align:right;">8.8<span class="z">级</span></div>
<div class="t " style="left:540px;top:228.56px;line-height:10px;font-size:8px;color:#111;width:40px;text-align:right;">39.6</div>
<div class="t " style="left:565px;top:228.56px;line-height:10px;font-size:8px;color:#111;width:40px;text-align:right;">1.2</div>
<div class="t " style="left:604px;top:228.56px;line-height:10px;font-size:8px;color:#111;width:40px;text-align:right;">33</div>
<div class="t " style="left:644px;top:228.56px;line-height:10px;font-size:8px;color:#111;width:40px;text-align:right;">12</div>
<div style="left:714px;top:226.36px;width:18px;height:9.5px;background:#8C8C8C"></div>
<div class="t " style="left:713px;top:227.36px;line-height:10px;font-size:8.2px;color:#DCDCDC;width:20px;text-align:center;">PDF</div>
<div style="left:740px;top:226.36px;width:18px;height:9.5px;background:#8C8C8C"></div>
<div class="t " style="left:737px;top:228.56px;line-height:10px;font-size:6.8px;color:#D8D8D8;width:24px;text-align:center;letter-spacing:-0.2px;">DWG</div>
<div style="left:782px;top:226.36px;width:18px;height:9.5px;background:#8C8C8C"></div>
<div class="t " style="left:782px;top:227.96px;line-height:10px;font-size:7.5px;color:#DCDCDC;width:18px;text-align:center;">SW</div>
<div style="left:172px;top:237.48px;width:23px;height:12.12px;background:linear-gradient(90deg,#F5F1E8,#E8E0D0);border-left:1px solid #B8AB9C;border-bottom:1px solid #BFB2A2;border-right:1px solid #C2B5A4"></div>
<div class="t s" style="left:172px;top:239.68px;line-height:10px;font-size:7.8px;color:#222;width:20px;text-align:right;">5</div>
<div style="left:195px;top:237.48px;width:623px;height:12.12px;background:#FAF0DF;border-top:1px solid #E6E2DA"></div>
<div style="left:238px;top:237.48px;width:1px;height:12.12px;background:#E0DCD4"></div>
<div style="left:278px;top:237.48px;width:1px;height:12.12px;background:#E0DCD4"></div>
<div style="left:316px;top:237.48px;width:1px;height:12.12px;background:#E0DCD4"></div>
<div style="left:360px;top:237.48px;width:1px;height:12.12px;background:#E0DCD4"></div>
<div style="left:418px;top:237.48px;width:1px;height:12.12px;background:#E0DCD4"></div>
<div style="left:443px;top:237.48px;width:1px;height:12.12px;background:#E0DCD4"></div>
<div style="left:469px;top:237.48px;width:1px;height:12.12px;background:#E0DCD4"></div>
<div style="left:494px;top:237.48px;width:1px;height:12.12px;background:#E0DCD4"></div>
<div style="left:529px;top:237.48px;width:1px;height:12.12px;background:#E0DCD4"></div>
<div style="left:582px;top:237.48px;width:1px;height:12.12px;background:#E0DCD4"></div>
<div style="left:607px;top:237.48px;width:1px;height:12.12px;background:#E0DCD4"></div>
<div style="left:646px;top:237.48px;width:1px;height:12.12px;background:#E0DCD4"></div>
<div style="left:686px;top:237.48px;width:1px;height:12.12px;background:#E0DCD4"></div>
<div style="left:711px;top:237.48px;width:1px;height:12.12px;background:#E0DCD4"></div>
<div style="left:735px;top:237.48px;width:1px;height:12.12px;background:#E0DCD4"></div>
<div style="left:762px;top:237.48px;width:1px;height:12.12px;background:#E0DCD4"></div>
<div style="left:818px;top:237.48px;width:1px;height:12.12px;background:#E0DCD4"></div>
<div class="cb" style="left:213px;top:239.48px;width:8px;height:8px;"></div>
<div class="t g" style="left:240.8px;top:240.68px;line-height:10px;font-size:8px;color:#111;">1.6</div>
<div class="t g" style="left:280.8px;top:240.68px;line-height:10px;font-size:8px;color:#111;">1.6.5</div>
<div class="t g" style="left:318px;top:240.68px;line-height:10px;font-size:8px;color:#111;"><span class="z">内六角螺栓</span>5</div>
<div class="t g" style="left:420.8px;top:240.68px;line-height:10px;font-size:8px;color:#111;">EA</div>
<div class="t g" style="left:445.8px;top:240.68px;line-height:10px;font-size:8px;color:#111;">E5</div>
<div class="t g" style="left:471px;top:240.68px;line-height:10px;font-size:8px;color:#111;"><span class="z">品牌</span>C</div>
<div class="t g" style="left:496px;top:240.68px;line-height:10px;font-size:8px;color:#111;"><span class="z">供应商</span>A5</div>
<div class="t g" style="left:363px;top:240.68px;line-height:10px;font-size:8px;color:#111;">20*40</div>
<div class="t g" style="left:373px;top:240.68px;line-height:10px;font-size:8px;color:#111;width:37px;text-align:right;">8.8<span class="z">级</span></div>
<div class="t " style="left:540px;top:240.68px;line-height:10px;font-size:8px;color:#111;width:40px;text-align:right;">40.8</div>
<div class="t " style="left:565px;top:240.68px;line-height:10px;font-size:8px;color:#111;width:40px;text-align:right;">1.2</div>
<div class="t " style="left:604px;top:240.68px;line-height:10px;font-size:8px;color:#111;width:40px;text-align:right;">34</div>
<div class="t " style="left:644px;top:240.68px;line-height:10px;font-size:8px;color:#111;width:40px;text-align:right;">12</div>
<div style="left:714px;top:238.48px;width:18px;height:9.5px;background:#8C8C8C"></div>
<div class="t " style="left:713px;top:239.48px;line-height:10px;font-size:8.2px;color:#DCDCDC;width:20px;text-align:center;">PDF</div>
<div style="left:740px;top:238.48px;width:18px;height:9.5px;background:#8C8C8C"></div>
<div class="t " style="left:737px;top:240.68px;line-height:10px;font-size:6.8px;color:#D8D8D8;width:24px;text-align:center;letter-spacing:-0.2px;">DWG</div>
<div style="left:782px;top:238.48px;width:18px;height:9.5px;background:#8C8C8C"></div>
<div class="t " style="left:782px;top:240.08px;line-height:10px;font-size:7.5px;color:#DCDCDC;width:18px;text-align:center;">SW</div>
<div style="left:172px;top:249.6px;width:23px;height:12.12px;background:linear-gradient(90deg,#F5F1E8,#E8E0D0);border-left:1px solid #B8AB9C;border-bottom:1px solid #BFB2A2;border-right:1px solid #C2B5A4"></div>
<div class="t s" style="left:172px;top:251.8px;line-height:10px;font-size:7.8px;color:#222;width:20px;text-align:right;">6</div>
<div style="left:195px;top:249.6px;width:623px;height:12.12px;background:#E0FFFF;border-top:1px solid #E6E2DA"></div>
<div style="left:238px;top:249.6px;width:1px;height:12.12px;background:#E0DCD4"></div>
<div style="left:278px;top:249.6px;width:1px;height:12.12px;background:#E0DCD4"></div>
<div style="left:316px;top:249.6px;width:1px;height:12.12px;background:#E0DCD4"></div>
<div style="left:360px;top:249.6px;width:1px;height:12.12px;background:#E0DCD4"></div>
<div style="left:418px;top:249.6px;width:1px;height:12.12px;background:#E0DCD4"></div>
<div style="left:443px;top:249.6px;width:1px;height:12.12px;background:#E0DCD4"></div>
<div style="left:469px;top:249.6px;width:1px;height:12.12px;background:#E0DCD4"></div>
<div style="left:494px;top:249.6px;width:1px;height:12.12px;background:#E0DCD4"></div>
<div style="left:529px;top:249.6px;width:1px;height:12.12px;background:#E0DCD4"></div>
<div style="left:582px;top:249.6px;width:1px;height:12.12px;background:#E0DCD4"></div>
<div style="left:607px;top:249.6px;width:1px;height:12.12px;background:#E0DCD4"></div>
<div style="left:646px;top:249.6px;width:1px;height:12.12px;background:#E0DCD4"></div>
<div style="left:686px;top:249.6px;width:1px;height:12.12px;background:#E0DCD4"></div>
<div style="left:711px;top:249.6px;width:1px;height:12.12px;background:#E0DCD4"></div>
<div style="left:735px;top:249.6px;width:1px;height:12.12px;background:#E0DCD4"></div>
<div style="left:762px;top:249.6px;width:1px;height:12.12px;background:#E0DCD4"></div>
<div style="left:818px;top:249.6px;width:1px;height:12.12px;background:#E0DCD4"></div>
<div class="cb" style="left:213px;top:251.6px;width:8px;height:8px;"></div>
<div class="t g" style="left:240.8px;top:252.8px;line-height:10px;font-size:8px;color:#111;">1.6</div>
<div class="t g" style="left:280.8px;top:252.8px;line-height:10px;font-size:8px;color:#111;">1.6.6</div>
<div class="t g" style="left:318px;top:252.8px;line-height:10px;font-size:8px;color:#111;"><span class="z">内六角螺栓</span>6</div>
<div class="t g" style="left:420.8px;top:252.8px;line-height:10px;font-size:8px;color:#111;">EA</div>
<div class="t g" style="left:445.8px;top:252.8px;line-height:10px;font-size:8px;color:#111;">F6</div>
<div class="t g" style="left:471px;top:252.8px;line-height:10px;font-size:8px;color:#111;"><span class="z">品牌</span>A</div>
<div class="t g" style="left:496px;top:252.8px;line-height:10px;font-size:8px;color:#111;"><span class="z">供应商</span>A6</div>
<div class="t g" style="left:363px;top:252.8px;line-height:10px;font-size:8px;color:#111;">20*45</div>
<div class="t g" style="left:373px;top:252.8px;line-height:10px;font-size:8px;color:#111;width:37px;text-align:right;">8.8<span class="z">级</span></div>
<div class="t " style="left:540px;top:252.8px;line-height:10px;font-size:8px;color:#111;width:40px;text-align:right;">42</div>
<div class="t " style="left:565px;top:252.8px;line-height:10px;font-size:8px;color:#111;width:40px;text-align:right;">1.2</div>
<div class="t " style="left:604px;top:252.8px;line-height:10px;font-size:8px;color:#111;width:40px;text-align:right;">35</div>
<div class="t " style="left:644px;top:252.8px;line-height:10px;font-size:8px;color:#111;width:40px;text-align:right;">12</div>
<div style="left:714px;top:250.6px;width:18px;height:9.5px;background:#8C8C8C"></div>
<div class="t " style="left:713px;top:251.6px;line-height:10px;font-size:8.2px;color:#DCDCDC;width:20px;text-align:center;">PDF</div>
<div style="left:740px;top:250.6px;width:18px;height:9.5px;background:#8C8C8C"></div>
<div class="t " style="left:737px;top:252.8px;line-height:10px;font-size:6.8px;color:#D8D8D8;width:24px;text-align:center;letter-spacing:-0.2px;">DWG</div>
<div style="left:782px;top:250.6px;width:18px;height:9.5px;background:#8C8C8C"></div>
<div class="t " style="left:782px;top:252.2px;line-height:10px;font-size:7.5px;color:#DCDCDC;width:18px;text-align:center;">SW</div>
<div style="left:172px;top:261.72px;width:23px;height:12.12px;background:linear-gradient(90deg,#F5F1E8,#E8E0D0);border-left:1px solid #B8AB9C;border-bottom:1px solid #BFB2A2;border-right:1px solid #C2B5A4"></div>
<div class="t s" style="left:172px;top:263.92px;line-height:10px;font-size:7.8px;color:#222;width:20px;text-align:right;">7</div>
<div style="left:195px;top:261.72px;width:623px;height:12.12px;background:#FAF0DF;border-top:1px solid #E6E2DA"></div>
<div style="left:238px;top:261.72px;width:1px;height:12.12px;background:#E0DCD4"></div>
<div style="left:278px;top:261.72px;width:1px;height:12.12px;background:#E0DCD4"></div>
<div style="left:316px;top:261.72px;width:1px;height:12.12px;background:#E0DCD4"></div>
<div style="left:360px;top:261.72px;width:1px;height:12.12px;background:#E0DCD4"></div>
<div style="left:418px;top:261.72px;width:1px;height:12.12px;background:#E0DCD4"></div>
<div style="left:443px;top:261.72px;width:1px;height:12.12px;background:#E0DCD4"></div>
<div style="left:469px;top:261.72px;width:1px;height:12.12px;background:#E0DCD4"></div>
<div style="left:494px;top:261.72px;width:1px;height:12.12px;background:#E0DCD4"></div>
<div style="left:529px;top:261.72px;width:1px;height:12.12px;background:#E0DCD4"></div>
<div style="left:582px;top:261.72px;width:1px;height:12.12px;background:#E0DCD4"></div>
<div style="left:607px;top:261.72px;width:1px;height:12.12px;background:#E0DCD4"></div>
<div style="left:646px;top:261.72px;width:1px;height:12.12px;background:#E0DCD4"></div>
<div style="left:686px;top:261.72px;width:1px;height:12.12px;background:#E0DCD4"></div>
<div style="left:711px;top:261.72px;width:1px;height:12.12px;background:#E0DCD4"></div>
<div style="left:735px;top:261.72px;width:1px;height:12.12px;background:#E0DCD4"></div>
<div style="left:762px;top:261.72px;width:1px;height:12.12px;background:#E0DCD4"></div>
<div style="left:818px;top:261.72px;width:1px;height:12.12px;background:#E0DCD4"></div>
<div class="cb" style="left:213px;top:263.72px;width:8px;height:8px;"></div>
<div class="t g" style="left:240.8px;top:264.92px;line-height:10px;font-size:8px;color:#111;">1.6</div>
<div class="t g" style="left:280.8px;top:264.92px;line-height:10px;font-size:8px;color:#111;">1.6.7</div>
<div class="t g" style="left:318px;top:264.92px;line-height:10px;font-size:8px;color:#111;"><span class="z">内六角螺栓</span>7</div>
<div class="t g" style="left:420.8px;top:264.92px;line-height:10px;font-size:8px;color:#111;">EA</div>
<div class="t g" style="left:445.8px;top:264.92px;line-height:10px;font-size:8px;color:#111;">G7</div>
<div class="t g" style="left:471px;top:264.92px;line-height:10px;font-size:8px;color:#111;"><span class="z">品牌</span>A</div>
<div class="t g" style="left:496px;top:264.92px;line-height:10px;font-size:8px;color:#111;"><span class="z">供应商</span>A7</div>
<div class="t g" style="left:363px;top:264.92px;line-height:10px;font-size:8px;color:#111;">20*50</div>
<div class="t g" style="left:373px;top:264.92px;line-height:10px;font-size:8px;color:#111;width:37px;text-align:right;">8.8<span class="z">级</span></div>
<div class="t " style="left:540px;top:264.92px;line-height:10px;font-size:8px;color:#111;width:40px;text-align:right;">43.2</div>
<div class="t " style="left:565px;top:264.92px;line-height:10px;font-size:8px;color:#111;width:40px;text-align:right;">1.2</div>
<div class="t " style="left:604px;top:264.92px;line-height:10px;font-size:8px;color:#111;width:40px;text-align:right;">36</div>
<div class="t " style="left:644px;top:264.92px;line-height:10px;font-size:8px;color:#111;width:40px;text-align:right;">12</div>
<div style="left:714px;top:262.72px;width:18px;height:9.5px;background:#8C8C8C"></div>
<div class="t " style="left:713px;top:263.72px;line-height:10px;font-size:8.2px;color:#DCDCDC;width:20px;text-align:center;">PDF</div>
<div style="left:740px;top:262.72px;width:18px;height:9.5px;background:#8C8C8C"></div>
<div class="t " style="left:737px;top:264.92px;line-height:10px;font-size:6.8px;color:#D8D8D8;width:24px;text-align:center;letter-spacing:-0.2px;">DWG</div>
<div style="left:782px;top:262.72px;width:18px;height:9.5px;background:#8C8C8C"></div>
<div class="t " style="left:782px;top:264.32px;line-height:10px;font-size:7.5px;color:#DCDCDC;width:18px;text-align:center;">SW</div>
<div style="left:172px;top:273.84px;width:23px;height:12.12px;background:linear-gradient(90deg,#F5F1E8,#E8E0D0);border-left:1px solid #B8AB9C;border-bottom:1px solid #BFB2A2;border-right:1px solid #C2B5A4"></div>
<div class="t s" style="left:172px;top:276.04px;line-height:10px;font-size:7.8px;color:#222;width:20px;text-align:right;">8</div>
<div style="left:195px;top:273.84px;width:623px;height:12.12px;background:#E0FFFF;border-top:1px solid #E6E2DA"></div>
<div style="left:238px;top:273.84px;width:1px;height:12.12px;background:#E0DCD4"></div>
<div style="left:278px;top:273.84px;width:1px;height:12.12px;background:#E0DCD4"></div>
<div style="left:316px;top:273.84px;width:1px;height:12.12px;background:#E0DCD4"></div>
<div style="left:360px;top:273.84px;width:1px;height:12.12px;background:#E0DCD4"></div>
<div style="left:418px;top:273.84px;width:1px;height:12.12px;background:#E0DCD4"></div>
<div style="left:443px;top:273.84px;width:1px;height:12.12px;background:#E0DCD4"></div>
<div style="left:469px;top:273.84px;width:1px;height:12.12px;background:#E0DCD4"></div>
<div style="left:494px;top:273.84px;width:1px;height:12.12px;background:#E0DCD4"></div>
<div style="left:529px;top:273.84px;width:1px;height:12.12px;background:#E0DCD4"></div>
<div style="left:582px;top:273.84px;width:1px;height:12.12px;background:#E0DCD4"></div>
<div style="left:607px;top:273.84px;width:1px;height:12.12px;background:#E0DCD4"></div>
<div style="left:646px;top:273.84px;width:1px;height:12.12px;background:#E0DCD4"></div>
<div style="left:686px;top:273.84px;width:1px;height:12.12px;background:#E0DCD4"></div>
<div style="left:711px;top:273.84px;width:1px;height:12.12px;background:#E0DCD4"></div>
<div style="left:735px;top:273.84px;width:1px;height:12.12px;background:#E0DCD4"></div>
<div style="left:762px;top:273.84px;width:1px;height:12.12px;background:#E0DCD4"></div>
<div style="left:818px;top:273.84px;width:1px;height:12.12px;background:#E0DCD4"></div>
<div class="cb" style="left:213px;top:275.84px;width:8px;height:8px;"></div>
<div class="t g" style="left:240.8px;top:277.04px;line-height:10px;font-size:8px;color:#111;">1.7</div>
<div class="t g" style="left:280.8px;top:277.04px;line-height:10px;font-size:8px;color:#111;">1.7.1</div>
<div class="t g" style="left:318px;top:277.04px;line-height:10px;font-size:8px;color:#111;"><span class="z">内六角螺栓</span>1</div>
<div class="t g" style="left:420.8px;top:277.04px;line-height:10px;font-size:8px;color:#111;">EA</div>
<div class="t g" style="left:445.8px;top:277.04px;line-height:10px;font-size:8px;color:#111;">A1</div>
<div class="t g" style="left:471px;top:277.04px;line-height:10px;font-size:8px;color:#111;"><span class="z">品牌</span>A</div>
<div class="t g" style="left:496px;top:277.04px;line-height:10px;font-size:8px;color:#111;"><span class="z">供应商</span>A1</div>
<div class="t g" style="left:363px;top:277.04px;line-height:10px;font-size:8px;color:#111;">16*110</div>
<div class="t g" style="left:379px;top:277.04px;line-height:10px;font-size:8px;color:#111;width:37px;text-align:right;">8.8<span class="z">级</span></div>
<div class="t " style="left:540px;top:277.04px;line-height:10px;font-size:8px;color:#111;width:40px;text-align:right;">9.6</div>
<div class="t " style="left:565px;top:277.04px;line-height:10px;font-size:8px;color:#111;width:40px;text-align:right;">0.8</div>
<div class="t " style="left:604px;top:277.04px;line-height:10px;font-size:8px;color:#111;width:40px;text-align:right;">12</div>
<div class="t " style="left:644px;top:277.04px;line-height:10px;font-size:8px;color:#111;width:40px;text-align:right;">12</div>
<div style="left:714px;top:274.84px;width:18px;height:9.5px;background:#8C8C8C"></div>
<div class="t " style="left:713px;top:275.84px;line-height:10px;font-size:8.2px;color:#DCDCDC;width:20px;text-align:center;">PDF</div>
<div style="left:740px;top:274.84px;width:18px;height:9.5px;background:#8C8C8C"></div>
<div class="t " style="left:737px;top:277.04px;line-height:10px;font-size:6.8px;color:#D8D8D8;width:24px;text-align:center;letter-spacing:-0.2px;">DWG</div>
<div style="left:782px;top:274.84px;width:18px;height:9.5px;background:#8C8C8C"></div>
<div class="t " style="left:782px;top:276.44px;line-height:10px;font-size:7.5px;color:#DCDCDC;width:18px;text-align:center;">SW</div>
<div style="left:172px;top:285.96px;width:23px;height:12.12px;background:linear-gradient(90deg,#F5F1E8,#E8E0D0);border-left:1px solid #B8AB9C;border-bottom:1px solid #BFB2A2;border-right:1px solid #C2B5A4"></div>
<div class="t s" style="left:172px;top:288.16px;line-height:10px;font-size:7.8px;color:#222;width:20px;text-align:right;">9</div>
<div style="left:195px;top:285.96px;width:623px;height:12.12px;background:#FAF0DF;border-top:1px solid #E6E2DA"></div>
<div style="left:238px;top:285.96px;width:1px;height:12.12px;background:#E0DCD4"></div>
<div style="left:278px;top:285.96px;width:1px;height:12.12px;background:#E0DCD4"></div>
<div style="left:316px;top:285.96px;width:1px;height:12.12px;background:#E0DCD4"></div>
<div style="left:360px;top:285.96px;width:1px;height:12.12px;background:#E0DCD4"></div>
<div style="left:418px;top:285.96px;width:1px;height:12.12px;background:#E0DCD4"></div>
<div style="left:443px;top:285.96px;width:1px;height:12.12px;background:#E0DCD4"></div>
<div style="left:469px;top:285.96px;width:1px;height:12.12px;background:#E0DCD4"></div>
<div style="left:494px;top:285.96px;width:1px;height:12.12px;background:#E0DCD4"></div>
<div style="left:529px;top:285.96px;width:1px;height:12.12px;background:#E0DCD4"></div>
<div style="left:582px;top:285.96px;width:1px;height:12.12px;background:#E0DCD4"></div>
<div style="left:607px;top:285.96px;width:1px;height:12.12px;background:#E0DCD4"></div>
<div style="left:646px;top:285.96px;width:1px;height:12.12px;background:#E0DCD4"></div>
<div style="left:686px;top:285.96px;width:1px;height:12.12px;background:#E0DCD4"></div>
<div style="left:711px;top:285.96px;width:1px;height:12.12px;background:#E0DCD4"></div>
<div style="left:735px;top:285.96px;width:1px;height:12.12px;background:#E0DCD4"></div>
<div style="left:762px;top:285.96px;width:1px;height:12.12px;background:#E0DCD4"></div>
<div style="left:818px;top:285.96px;width:1px;height:12.12px;background:#E0DCD4"></div>
<div class="cb" style="left:213px;top:287.96px;width:8px;height:8px;"></div>
<div class="t g" style="left:240.8px;top:289.16px;line-height:10px;font-size:8px;color:#111;">1.7</div>
<div class="t g" style="left:280.8px;top:289.16px;line-height:10px;font-size:8px;color:#111;">1.7.2</div>
<div class="t g" style="left:318px;top:289.16px;line-height:10px;font-size:8px;color:#111;"><span class="z">内六角螺栓</span>2</div>
<div class="t g" style="left:420.8px;top:289.16px;line-height:10px;font-size:8px;color:#111;">EA</div>
<div class="t g" style="left:445.8px;top:289.16px;line-height:10px;font-size:8px;color:#111;">B2</div>
<div class="t g" style="left:471px;top:289.16px;line-height:10px;font-size:8px;color:#111;"><span class="z">品牌</span>B</div>
<div class="t g" style="left:496px;top:289.16px;line-height:10px;font-size:8px;color:#111;"><span class="z">供应商</span>A2</div>
<div class="t g" style="left:363px;top:289.16px;line-height:10px;font-size:8px;color:#111;">16*130</div>
<div class="t g" style="left:378px;top:289.16px;line-height:10px;font-size:8px;color:#111;width:37px;text-align:right;">8.8<span class="z">级</span></div>
<div class="t " style="left:540px;top:289.16px;line-height:10px;font-size:8px;color:#111;width:40px;text-align:right;">50</div>
<div class="t " style="left:565px;top:289.16px;line-height:10px;font-size:8px;color:#111;width:40px;text-align:right;">1</div>
<div class="t " style="left:604px;top:289.16px;line-height:10px;font-size:8px;color:#111;width:40px;text-align:right;">50</div>
<div class="t " style="left:644px;top:289.16px;line-height:10px;font-size:8px;color:#111;width:40px;text-align:right;">12</div>
<div style="left:714px;top:286.96px;width:18px;height:9.5px;background:#8C8C8C"></div>
<div class="t " style="left:713px;top:287.96px;line-height:10px;font-size:8.2px;color:#DCDCDC;width:20px;text-align:center;">PDF</div>
<div style="left:740px;top:286.96px;width:18px;height:9.5px;background:#8C8C8C"></div>
<div class="t " style="left:737px;top:289.16px;line-height:10px;font-size:6.8px;color:#D8D8D8;width:24px;text-align:center;letter-spacing:-0.2px;">DWG</div>
<div style="left:782px;top:286.96px;width:18px;height:9.5px;background:#8C8C8C"></div>
<div class="t " style="left:782px;top:288.56px;line-height:10px;font-size:7.5px;color:#DCDCDC;width:18px;text-align:center;">SW</div>
<div style="left:172px;top:298.08px;width:23px;height:12.12px;background:linear-gradient(90deg,#F5F1E8,#E8E0D0);border-left:1px solid #B8AB9C;border-bottom:1px solid #BFB2A2;border-right:1px solid #C2B5A4"></div>
<div class="t s" style="left:172px;top:300.28px;line-height:10px;font-size:7.8px;color:#222;width:20px;text-align:right;">10</div>
<div style="left:195px;top:298.08px;width:623px;height:12.12px;background:#E0FFFF;border-top:1px solid #E6E2DA"></div>
<div style="left:238px;top:298.08px;width:1px;height:12.12px;background:#E0DCD4"></div>
<div style="left:278px;top:298.08px;width:1px;height:12.12px;background:#E0DCD4"></div>
<div style="left:316px;top:298.08px;width:1px;height:12.12px;background:#E0DCD4"></div>
<div style="left:360px;top:298.08px;width:1px;height:12.12px;background:#E0DCD4"></div>
<div style="left:418px;top:298.08px;width:1px;height:12.12px;background:#E0DCD4"></div>
<div style="left:443px;top:298.08px;width:1px;height:12.12px;background:#E0DCD4"></div>
<div style="left:469px;top:298.08px;width:1px;height:12.12px;background:#E0DCD4"></div>
<div style="left:494px;top:298.08px;width:1px;height:12.12px;background:#E0DCD4"></div>
<div style="left:529px;top:298.08px;width:1px;height:12.12px;background:#E0DCD4"></div>
<div style="left:582px;top:298.08px;width:1px;height:12.12px;background:#E0DCD4"></div>
<div style="left:607px;top:298.08px;width:1px;height:12.12px;background:#E0DCD4"></div>
<div style="left:646px;top:298.08px;width:1px;height:12.12px;background:#E0DCD4"></div>
<div style="left:686px;top:298.08px;width:1px;height:12.12px;background:#E0DCD4"></div>
<div style="left:711px;top:298.08px;width:1px;height:12.12px;background:#E0DCD4"></div>
<div style="left:735px;top:298.08px;width:1px;height:12.12px;background:#E0DCD4"></div>
<div style="left:762px;top:298.08px;width:1px;height:12.12px;background:#E0DCD4"></div>
<div style="left:818px;top:298.08px;width:1px;height:12.12px;background:#E0DCD4"></div>
<div class="cb" style="left:213px;top:300.08px;width:8px;height:8px;"></div>
<div class="t g" style="left:240.8px;top:301.28px;line-height:10px;font-size:8px;color:#111;">1.7</div>
<div class="t g" style="left:280.8px;top:301.28px;line-height:10px;font-size:8px;color:#111;">1.7.3</div>
<div class="t g" style="left:318px;top:301.28px;line-height:10px;font-size:8px;color:#111;"><span class="z">内六角螺栓</span>3</div>
<div class="t g" style="left:420.8px;top:301.28px;line-height:10px;font-size:8px;color:#111;">EA</div>
<div class="t g" style="left:445.8px;top:301.28px;line-height:10px;font-size:8px;color:#111;">C3</div>
<div class="t g" style="left:471px;top:301.28px;line-height:10px;font-size:8px;color:#111;"><span class="z">品牌</span>B</div>
<div class="t g" style="left:496px;top:301.28px;line-height:10px;font-size:8px;color:#111;"><span class="z">供应商</span>A3</div>
<div class="t g" style="left:363px;top:301.28px;line-height:10px;font-size:8px;color:#111;">18*120</div>
<div class="t g" style="left:374px;top:301.28px;line-height:10px;font-size:8px;color:#111;width:37px;text-align:right;">8.8<span class="z">级</span></div>
<div class="t " style="left:540px;top:301.28px;line-height:10px;font-size:8px;color:#111;width:40px;text-align:right;">25.6</div>
<div class="t " style="left:565px;top:301.28px;line-height:10px;font-size:8px;color:#111;width:40px;text-align:right;">0.8</div>
<div class="t " style="left:604px;top:301.28px;line-height:10px;font-size:8px;color:#111;width:40px;text-align:right;">32</div>
<div class="t " style="left:644px;top:301.28px;line-height:10px;font-size:8px;color:#111;width:40px;text-align:right;">12</div>
<div style="left:714px;top:299.08px;width:18px;height:9.5px;background:#8C8C8C"></div>
<div class="t " style="left:713px;top:300.08px;line-height:10px;font-size:8.2px;color:#DCDCDC;width:20px;text-align:center;">PDF</div>
<div style="left:740px;top:299.08px;width:18px;height:9.5px;background:#8C8C8C"></div>
<div class="t " style="left:737px;top:301.28px;line-height:10px;font-size:6.8px;color:#D8D8D8;width:24px;text-align:center;letter-spacing:-0.2px;">DWG</div>
<div style="left:782px;top:299.08px;width:18px;height:9.5px;background:#8C8C8C"></div>
<div class="t " style="left:782px;top:300.68px;line-height:10px;font-size:7.5px;color:#DCDCDC;width:18px;text-align:center;">SW</div>
<div style="left:172px;top:310.2px;width:23px;height:12.12px;background:linear-gradient(90deg,#F5F1E8,#E8E0D0);border-left:1px solid #B8AB9C;border-bottom:1px solid #BFB2A2;border-right:1px solid #C2B5A4"></div>
<div class="t s" style="left:172px;top:312.4px;line-height:10px;font-size:7.8px;color:#222;width:20px;text-align:right;">11</div>
<div style="left:195px;top:310.2px;width:623px;height:12.12px;background:#FAF0DF;border-top:1px solid #E6E2DA"></div>
<div style="left:238px;top:310.2px;width:1px;height:12.12px;background:#E0DCD4"></div>
<div style="left:278px;top:310.2px;width:1px;height:12.12px;background:#E0DCD4"></div>
<div style="left:316px;top:310.2px;width:1px;height:12.12px;background:#E0DCD4"></div>
<div style="left:360px;top:310.2px;width:1px;height:12.12px;background:#E0DCD4"></div>
<div style="left:418px;top:310.2px;width:1px;height:12.12px;background:#E0DCD4"></div>
<div style="left:443px;top:310.2px;width:1px;height:12.12px;background:#E0DCD4"></div>
<div style="left:469px;top:310.2px;width:1px;height:12.12px;background:#E0DCD4"></div>
<div style="left:494px;top:310.2px;width:1px;height:12.12px;background:#E0DCD4"></div>
<div style="left:529px;top:310.2px;width:1px;height:12.12px;background:#E0DCD4"></div>
<div style="left:582px;top:310.2px;width:1px;height:12.12px;background:#E0DCD4"></div>
<div style="left:607px;top:310.2px;width:1px;height:12.12px;background:#E0DCD4"></div>
<div style="left:646px;top:310.2px;width:1px;height:12.12px;background:#E0DCD4"></div>
<div style="left:686px;top:310.2px;width:1px;height:12.12px;background:#E0DCD4"></div>
<div style="left:711px;top:310.2px;width:1px;height:12.12px;background:#E0DCD4"></div>
<div style="left:735px;top:310.2px;width:1px;height:12.12px;background:#E0DCD4"></div>
<div style="left:762px;top:310.2px;width:1px;height:12.12px;background:#E0DCD4"></div>
<div style="left:818px;top:310.2px;width:1px;height:12.12px;background:#E0DCD4"></div>
<div class="cb" style="left:213px;top:312.2px;width:8px;height:8px;"></div>
<div class="t g" style="left:240.8px;top:313.4px;line-height:10px;font-size:8px;color:#111;">1.7</div>
<div class="t g" style="left:280.8px;top:313.4px;line-height:10px;font-size:8px;color:#111;">1.7.4</div>
<div class="t g" style="left:318px;top:313.4px;line-height:10px;font-size:8px;color:#111;"><span class="z">内六角螺栓</span>4</div>
<div class="t g" style="left:420.8px;top:313.4px;line-height:10px;font-size:8px;color:#111;">EA</div>
<div class="t g" style="left:445.8px;top:313.4px;line-height:10px;font-size:8px;color:#111;">D4</div>
<div class="t g" style="left:471px;top:313.4px;line-height:10px;font-size:8px;color:#111;"><span class="z">品牌</span>C</div>
<div class="t g" style="left:496px;top:313.4px;line-height:10px;font-size:8px;color:#111;"><span class="z">供应商</span>A4</div>
<div class="t g" style="left:363px;top:313.4px;line-height:10px;font-size:8px;color:#111;">20*30</div>
<div class="t g" style="left:369px;top:313.4px;line-height:10px;font-size:8px;color:#111;width:37px;text-align:right;">8.8<span class="z">级</span></div>
<div class="t " style="left:540px;top:313.4px;line-height:10px;font-size:8px;color:#111;width:40px;text-align:right;">26.4</div>
<div class="t " style="left:565px;top:313.4px;line-height:10px;font-size:8px;color:#111;width:40px;text-align:right;">0.8</div>
<div class="t " style="left:604px;top:313.4px;line-height:10px;font-size:8px;color:#111;width:40px;text-align:right;">33</div>
<div class="t " style="left:644px;top:313.4px;line-height:10px;font-size:8px;color:#111;width:40px;text-align:right;">12</div>
<div style="left:714px;top:311.2px;width:18px;height:9.5px;background:#8C8C8C"></div>
<div class="t " style="left:713px;top:312.2px;line-height:10px;font-size:8.2px;color:#DCDCDC;width:20px;text-align:center;">PDF</div>
<div style="left:740px;top:311.2px;width:18px;height:9.5px;background:#8C8C8C"></div>
<div class="t " style="left:737px;top:313.4px;line-height:10px;font-size:6.8px;color:#D8D8D8;width:24px;text-align:center;letter-spacing:-0.2px;">DWG</div>
<div style="left:782px;top:311.2px;width:18px;height:9.5px;background:#8C8C8C"></div>
<div class="t " style="left:782px;top:312.8px;line-height:10px;font-size:7.5px;color:#DCDCDC;width:18px;text-align:center;">SW</div>
<div style="left:172px;top:322.32px;width:23px;height:12.12px;background:linear-gradient(90deg,#F5F1E8,#E8E0D0);border-left:1px solid #B8AB9C;border-bottom:1px solid #BFB2A2;border-right:1px solid #C2B5A4"></div>
<div class="t s" style="left:172px;top:324.52px;line-height:10px;font-size:7.8px;color:#222;width:20px;text-align:right;">12</div>
<div style="left:195px;top:322.32px;width:623px;height:12.12px;background:#E0FFFF;border-top:1px solid #E6E2DA"></div>
<div style="left:238px;top:322.32px;width:1px;height:12.12px;background:#E0DCD4"></div>
<div style="left:278px;top:322.32px;width:1px;height:12.12px;background:#E0DCD4"></div>
<div style="left:316px;top:322.32px;width:1px;height:12.12px;background:#E0DCD4"></div>
<div style="left:360px;top:322.32px;width:1px;height:12.12px;background:#E0DCD4"></div>
<div style="left:418px;top:322.32px;width:1px;height:12.12px;background:#E0DCD4"></div>
<div style="left:443px;top:322.32px;width:1px;height:12.12px;background:#E0DCD4"></div>
<div style="left:469px;top:322.32px;width:1px;height:12.12px;background:#E0DCD4"></div>
<div style="left:494px;top:322.32px;width:1px;height:12.12px;background:#E0DCD4"></div>
<div style="left:529px;top:322.32px;width:1px;height:12.12px;background:#E0DCD4"></div>
<div style="left:582px;top:322.32px;width:1px;height:12.12px;background:#E0DCD4"></div>
<div style="left:607px;top:322.32px;width:1px;height:12.12px;background:#E0DCD4"></div>
<div style="left:646px;top:322.32px;width:1px;height:12.12px;background:#E0DCD4"></div>
<div style="left:686px;top:322.32px;width:1px;height:12.12px;background:#E0DCD4"></div>
<div style="left:711px;top:322.32px;width:1px;height:12.12px;background:#E0DCD4"></div>
<div style="left:735px;top:322.32px;width:1px;height:12.12px;background:#E0DCD4"></div>
<div style="left:762px;top:322.32px;width:1px;height:12.12px;background:#E0DCD4"></div>
<div style="left:818px;top:322.32px;width:1px;height:12.12px;background:#E0DCD4"></div>
<div class="cb" style="left:213px;top:324.32px;width:8px;height:8px;"></div>
<div class="t g" style="left:240.8px;top:325.52px;line-height:10px;font-size:8px;color:#111;">1.7</div>
<div class="t g" style="left:280.8px;top:325.52px;line-height:10px;font-size:8px;color:#111;">1.7.5</div>
<div class="t g" style="left:318px;top:325.52px;line-height:10px;font-size:8px;color:#111;"><span class="z">内六角螺栓</span>5</div>
<div class="t g" style="left:420.8px;top:325.52px;line-height:10px;font-size:8px;color:#111;">EA</div>
<div class="t g" style="left:445.8px;top:325.52px;line-height:10px;font-size:8px;color:#111;">E5</div>
<div class="t g" style="left:471px;top:325.52px;line-height:10px;font-size:8px;color:#111;"><span class="z">品牌</span>C</div>
<div class="t g" style="left:496px;top:325.52px;line-height:10px;font-size:8px;color:#111;"><span class="z">供应商</span>A5</div>
<div class="t g" style="left:363px;top:325.52px;line-height:10px;font-size:8px;color:#111;">20*40</div>
<div class="t g" style="left:373px;top:325.52px;line-height:10px;font-size:8px;color:#111;width:37px;text-align:right;">8.8<span class="z">级</span></div>
<div class="t " style="left:540px;top:325.52px;line-height:10px;font-size:8px;color:#111;width:40px;text-align:right;">27.2</div>
<div class="t " style="left:565px;top:325.52px;line-height:10px;font-size:8px;color:#111;width:40px;text-align:right;">0.8</div>
<div class="t " style="left:604px;top:325.52px;line-height:10px;font-size:8px;color:#111;width:40px;text-align:right;">34</div>
<div class="t " style="left:644px;top:325.52px;line-height:10px;font-size:8px;color:#111;width:40px;text-align:right;">12</div>
<div style="left:714px;top:323.32px;width:18px;height:9.5px;background:#8C8C8C"></div>
<div class="t " style="left:713px;top:324.32px;line-height:10px;font-size:8.2px;color:#DCDCDC;width:20px;text-align:center;">PDF</div>
<div style="left:740px;top:323.32px;width:18px;height:9.5px;background:#8C8C8C"></div>
<div class="t " style="left:737px;top:325.52px;line-height:10px;font-size:6.8px;color:#D8D8D8;width:24px;text-align:center;letter-spacing:-0.2px;">DWG</div>
<div style="left:782px;top:323.32px;width:18px;height:9.5px;background:#8C8C8C"></div>
<div class="t " style="left:782px;top:324.92px;line-height:10px;font-size:7.5px;color:#DCDCDC;width:18px;text-align:center;">SW</div>
<div style="left:172px;top:334.44px;width:23px;height:12.12px;background:linear-gradient(90deg,#F5F1E8,#E8E0D0);border-left:1px solid #B8AB9C;border-bottom:1px solid #BFB2A2;border-right:1px solid #C2B5A4"></div>
<div class="t s" style="left:172px;top:336.64px;line-height:10px;font-size:7.8px;color:#222;width:20px;text-align:right;">13</div>
<div style="left:195px;top:334.44px;width:623px;height:12.12px;background:#FAF0DF;border-top:1px solid #E6E2DA"></div>
<div style="left:238px;top:334.44px;width:1px;height:12.12px;background:#E0DCD4"></div>
<div style="left:278px;top:334.44px;width:1px;height:12.12px;background:#E0DCD4"></div>
<div style="left:316px;top:334.44px;width:1px;height:12.12px;background:#E0DCD4"></div>
<div style="left:360px;top:334.44px;width:1px;height:12.12px;background:#E0DCD4"></div>
<div style="left:418px;top:334.44px;width:1px;height:12.12px;background:#E0DCD4"></div>
<div style="left:443px;top:334.44px;width:1px;height:12.12px;background:#E0DCD4"></div>
<div style="left:469px;top:334.44px;width:1px;height:12.12px;background:#E0DCD4"></div>
<div style="left:494px;top:334.44px;width:1px;height:12.12px;background:#E0DCD4"></div>
<div style="left:529px;top:334.44px;width:1px;height:12.12px;background:#E0DCD4"></div>
<div style="left:582px;top:334.44px;width:1px;height:12.12px;background:#E0DCD4"></div>
<div style="left:607px;top:334.44px;width:1px;height:12.12px;background:#E0DCD4"></div>
<div style="left:646px;top:334.44px;width:1px;height:12.12px;background:#E0DCD4"></div>
<div style="left:686px;top:334.44px;width:1px;height:12.12px;background:#E0DCD4"></div>
<div style="left:711px;top:334.44px;width:1px;height:12.12px;background:#E0DCD4"></div>
<div style="left:735px;top:334.44px;width:1px;height:12.12px;background:#E0DCD4"></div>
<div style="left:762px;top:334.44px;width:1px;height:12.12px;background:#E0DCD4"></div>
<div style="left:818px;top:334.44px;width:1px;height:12.12px;background:#E0DCD4"></div>
<div class="cb" style="left:213px;top:336.44px;width:8px;height:8px;"></div>
<div class="t g" style="left:240.8px;top:337.64px;line-height:10px;font-size:8px;color:#111;">1.7</div>
<div class="t g" style="left:280.8px;top:337.64px;line-height:10px;font-size:8px;color:#111;">1.7.6</div>
<div class="t g" style="left:318px;top:337.64px;line-height:10px;font-size:8px;color:#111;"><span class="z">内六角螺栓</span>6</div>
<div class="t g" style="left:420.8px;top:337.64px;line-height:10px;font-size:8px;color:#111;">EA</div>
<div class="t g" style="left:445.8px;top:337.64px;line-height:10px;font-size:8px;color:#111;">F6</div>
<div class="t g" style="left:471px;top:337.64px;line-height:10px;font-size:8px;color:#111;"><span class="z">品牌</span>A</div>
<div class="t g" style="left:496px;top:337.64px;line-height:10px;font-size:8px;color:#111;"><span class="z">供应商</span>A6</div>
<div class="t g" style="left:363px;top:337.64px;line-height:10px;font-size:8px;color:#111;">20*45</div>
<div class="t g" style="left:373px;top:337.64px;line-height:10px;font-size:8px;color:#111;width:37px;text-align:right;">8.8<span class="z">级</span></div>
<div class="t " style="left:540px;top:337.64px;line-height:10px;font-size:8px;color:#111;width:40px;text-align:right;">50.05</div>
<div class="t " style="left:565px;top:337.64px;line-height:10px;font-size:8px;color:#111;width:40px;text-align:right;">1.3</div>
<div class="t " style="left:604px;top:337.64px;line-height:10px;font-size:8px;color:#111;width:40px;text-align:right;">38.5</div>
<div class="t " style="left:644px;top:337.64px;line-height:10px;font-size:8px;color:#111;width:40px;text-align:right;">12</div>
<div style="left:714px;top:335.44px;width:18px;height:9.5px;background:#8C8C8C"></div>
<div class="t " style="left:713px;top:336.44px;line-height:10px;font-size:8.2px;color:#DCDCDC;width:20px;text-align:center;">PDF</div>
<div style="left:740px;top:335.44px;width:18px;height:9.5px;background:#8C8C8C"></div>
<div class="t " style="left:737px;top:337.64px;line-height:10px;font-size:6.8px;color:#D8D8D8;width:24px;text-align:center;letter-spacing:-0.2px;">DWG</div>
<div style="left:782px;top:335.44px;width:18px;height:9.5px;background:#8C8C8C"></div>
<div class="t " style="left:782px;top:337.04px;line-height:10px;font-size:7.5px;color:#DCDCDC;width:18px;text-align:center;">SW</div>
<div style="left:172px;top:346.56px;width:23px;height:12.12px;background:linear-gradient(90deg,#F5F1E8,#E8E0D0);border-left:1px solid #B8AB9C;border-bottom:1px solid #BFB2A2;border-right:1px solid #C2B5A4"></div>
<div class="t s" style="left:172px;top:348.76px;line-height:10px;font-size:7.8px;color:#222;width:20px;text-align:right;">14</div>
<div style="left:195px;top:346.56px;width:623px;height:12.12px;background:#E0FFFF;border-top:1px solid #E6E2DA"></div>
<div style="left:238px;top:346.56px;width:1px;height:12.12px;background:#E0DCD4"></div>
<div style="left:278px;top:346.56px;width:1px;height:12.12px;background:#E0DCD4"></div>
<div style="left:316px;top:346.56px;width:1px;height:12.12px;background:#E0DCD4"></div>
<div style="left:360px;top:346.56px;width:1px;height:12.12px;background:#E0DCD4"></div>
<div style="left:418px;top:346.56px;width:1px;height:12.12px;background:#E0DCD4"></div>
<div style="left:443px;top:346.56px;width:1px;height:12.12px;background:#E0DCD4"></div>
<div style="left:469px;top:346.56px;width:1px;height:12.12px;background:#E0DCD4"></div>
<div style="left:494px;top:346.56px;width:1px;height:12.12px;background:#E0DCD4"></div>
<div style="left:529px;top:346.56px;width:1px;height:12.12px;background:#E0DCD4"></div>
<div style="left:582px;top:346.56px;width:1px;height:12.12px;background:#E0DCD4"></div>
<div style="left:607px;top:346.56px;width:1px;height:12.12px;background:#E0DCD4"></div>
<div style="left:646px;top:346.56px;width:1px;height:12.12px;background:#E0DCD4"></div>
<div style="left:686px;top:346.56px;width:1px;height:12.12px;background:#E0DCD4"></div>
<div style="left:711px;top:346.56px;width:1px;height:12.12px;background:#E0DCD4"></div>
<div style="left:735px;top:346.56px;width:1px;height:12.12px;background:#E0DCD4"></div>
<div style="left:762px;top:346.56px;width:1px;height:12.12px;background:#E0DCD4"></div>
<div style="left:818px;top:346.56px;width:1px;height:12.12px;background:#E0DCD4"></div>
<div class="cb" style="left:213px;top:348.56px;width:8px;height:8px;"></div>
<div class="t g" style="left:240.8px;top:349.76px;line-height:10px;font-size:8px;color:#111;">1.7</div>
<div class="t g" style="left:280.8px;top:349.76px;line-height:10px;font-size:8px;color:#111;">1.7.7</div>
<div class="t g" style="left:318px;top:349.76px;line-height:10px;font-size:8px;color:#111;"><span class="z">内六角螺栓</span>7</div>
<div class="t g" style="left:420.8px;top:349.76px;line-height:10px;font-size:8px;color:#111;">EA</div>
<div class="t g" style="left:445.8px;top:349.76px;line-height:10px;font-size:8px;color:#111;">G7</div>
<div class="t g" style="left:471px;top:349.76px;line-height:10px;font-size:8px;color:#111;"><span class="z">品牌</span>A</div>
<div class="t g" style="left:496px;top:349.76px;line-height:10px;font-size:8px;color:#111;"><span class="z">供应商</span>A7</div>
<div class="t g" style="left:363px;top:349.76px;line-height:10px;font-size:8px;color:#111;">20*50</div>
<div class="t g" style="left:373px;top:349.76px;line-height:10px;font-size:8px;color:#111;width:37px;text-align:right;">8.8<span class="z">级</span></div>
<div class="t " style="left:540px;top:349.76px;line-height:10px;font-size:8px;color:#111;width:40px;text-align:right;">150</div>
<div class="t " style="left:565px;top:349.76px;line-height:10px;font-size:8px;color:#111;width:40px;text-align:right;">1.5</div>
<div class="t " style="left:604px;top:349.76px;line-height:10px;font-size:8px;color:#111;width:40px;text-align:right;">100</div>
<div class="t " style="left:644px;top:349.76px;line-height:10px;font-size:8px;color:#111;width:40px;text-align:right;">12</div>
<div style="left:714px;top:347.56px;width:18px;height:9.5px;background:#8C8C8C"></div>
<div class="t " style="left:713px;top:348.56px;line-height:10px;font-size:8.2px;color:#DCDCDC;width:20px;text-align:center;">PDF</div>
<div style="left:740px;top:347.56px;width:18px;height:9.5px;background:#8C8C8C"></div>
<div class="t " style="left:737px;top:349.76px;line-height:10px;font-size:6.8px;color:#D8D8D8;width:24px;text-align:center;letter-spacing:-0.2px;">DWG</div>
<div style="left:782px;top:347.56px;width:18px;height:9.5px;background:#8C8C8C"></div>
<div class="t " style="left:782px;top:349.16px;line-height:10px;font-size:7.5px;color:#DCDCDC;width:18px;text-align:center;">SW</div>
<div style="left:172px;top:358.68px;width:23px;height:12.12px;background:linear-gradient(90deg,#F5F1E8,#E8E0D0);border-left:1px solid #B8AB9C;border-bottom:1px solid #BFB2A2;border-right:1px solid #C2B5A4"></div>
<div class="t s" style="left:172px;top:360.88px;line-height:10px;font-size:7.8px;color:#222;width:20px;text-align:right;">15</div>
<div style="left:195px;top:358.68px;width:623px;height:12.12px;background:#FAF0DF;border-top:1px solid #E6E2DA"></div>
<div style="left:238px;top:358.68px;width:1px;height:12.12px;background:#E0DCD4"></div>
<div style="left:278px;top:358.68px;width:1px;height:12.12px;background:#E0DCD4"></div>
<div style="left:316px;top:358.68px;width:1px;height:12.12px;background:#E0DCD4"></div>
<div style="left:360px;top:358.68px;width:1px;height:12.12px;background:#E0DCD4"></div>
<div style="left:418px;top:358.68px;width:1px;height:12.12px;background:#E0DCD4"></div>
<div style="left:443px;top:358.68px;width:1px;height:12.12px;background:#E0DCD4"></div>
<div style="left:469px;top:358.68px;width:1px;height:12.12px;background:#E0DCD4"></div>
<div style="left:494px;top:358.68px;width:1px;height:12.12px;background:#E0DCD4"></div>
<div style="left:529px;top:358.68px;width:1px;height:12.12px;background:#E0DCD4"></div>
<div style="left:582px;top:358.68px;width:1px;height:12.12px;background:#E0DCD4"></div>
<div style="left:607px;top:358.68px;width:1px;height:12.12px;background:#E0DCD4"></div>
<div style="left:646px;top:358.68px;width:1px;height:12.12px;background:#E0DCD4"></div>
<div style="left:686px;top:358.68px;width:1px;height:12.12px;background:#E0DCD4"></div>
<div style="left:711px;top:358.68px;width:1px;height:12.12px;background:#E0DCD4"></div>
<div style="left:735px;top:358.68px;width:1px;height:12.12px;background:#E0DCD4"></div>
<div style="left:762px;top:358.68px;width:1px;height:12.12px;background:#E0DCD4"></div>
<div style="left:818px;top:358.68px;width:1px;height:12.12px;background:#E0DCD4"></div>
<div class="cb" style="left:213px;top:360.68px;width:8px;height:8px;"></div>
<div class="t g" style="left:240.8px;top:361.88px;line-height:10px;font-size:8px;color:#111;">1.8</div>
<div class="t g" style="left:280.8px;top:361.88px;line-height:10px;font-size:8px;color:#111;">1.8.1</div>
<div class="t g" style="left:318px;top:361.88px;line-height:10px;font-size:8px;color:#111;"><span class="z">内六角螺栓</span>1</div>
<div class="t g" style="left:420.8px;top:361.88px;line-height:10px;font-size:8px;color:#111;">EA</div>
<div class="t g" style="left:445.8px;top:361.88px;line-height:10px;font-size:8px;color:#111;">A1</div>
<div class="t g" style="left:471px;top:361.88px;line-height:10px;font-size:8px;color:#111;"><span class="z">品牌</span>A</div>
<div class="t g" style="left:496px;top:361.88px;line-height:10px;font-size:8px;color:#111;"><span class="z">供应商</span>A1</div>
<div class="t g" style="left:363px;top:361.88px;line-height:10px;font-size:8px;color:#111;">16*110</div>
<div class="t g" style="left:379px;top:361.88px;line-height:10px;font-size:8px;color:#111;width:37px;text-align:right;">8.8<span class="z">级</span></div>
<div class="t " style="left:540px;top:361.88px;line-height:10px;font-size:8px;color:#111;width:40px;text-align:right;">54</div>
<div class="t " style="left:565px;top:361.88px;line-height:10px;font-size:8px;color:#111;width:40px;text-align:right;">1.2</div>
<div class="t " style="left:604px;top:361.88px;line-height:10px;font-size:8px;color:#111;width:40px;text-align:right;">45</div>
<div class="t " style="left:644px;top:361.88px;line-height:10px;font-size:8px;color:#111;width:40px;text-align:right;">12</div>
<div style="left:714px;top:359.68px;width:18px;height:9.5px;background:#8C8C8C"></div>
<div class="t " style="left:713px;top:360.68px;line-height:10px;font-size:8.2px;color:#DCDCDC;width:20px;text-align:center;">PDF</div>
<div style="left:740px;top:359.68px;width:18px;height:9.5px;background:#8C8C8C"></div>
<div class="t " style="left:737px;top:361.88px;line-height:10px;font-size:6.8px;color:#D8D8D8;width:24px;text-align:center;letter-spacing:-0.2px;">DWG</div>
<div style="left:782px;top:359.68px;width:18px;height:9.5px;background:#8C8C8C"></div>
<div class="t " style="left:782px;top:361.28px;line-height:10px;font-size:7.5px;color:#DCDCDC;width:18px;text-align:center;">SW</div>
<div style="left:172px;top:370.8px;width:23px;height:12.12px;background:linear-gradient(90deg,#F5F1E8,#E8E0D0);border-left:1px solid #B8AB9C;border-bottom:1px solid #BFB2A2;border-right:1px solid #C2B5A4"></div>
<div class="t s" style="left:172px;top:373px;line-height:10px;font-size:7.8px;color:#222;width:20px;text-align:right;">16</div>
<div style="left:195px;top:370.8px;width:623px;height:12.12px;background:#E0FFFF;border-top:1px solid #E6E2DA"></div>
<div style="left:238px;top:370.8px;width:1px;height:12.12px;background:#E0DCD4"></div>
<div style="left:278px;top:370.8px;width:1px;height:12.12px;background:#E0DCD4"></div>
<div style="left:316px;top:370.8px;width:1px;height:12.12px;background:#E0DCD4"></div>
<div style="left:360px;top:370.8px;width:1px;height:12.12px;background:#E0DCD4"></div>
<div style="left:418px;top:370.8px;width:1px;height:12.12px;background:#E0DCD4"></div>
<div style="left:443px;top:370.8px;width:1px;height:12.12px;background:#E0DCD4"></div>
<div style="left:469px;top:370.8px;width:1px;height:12.12px;background:#E0DCD4"></div>
<div style="left:494px;top:370.8px;width:1px;height:12.12px;background:#E0DCD4"></div>
<div style="left:529px;top:370.8px;width:1px;height:12.12px;background:#E0DCD4"></div>
<div style="left:582px;top:370.8px;width:1px;height:12.12px;background:#E0DCD4"></div>
<div style="left:607px;top:370.8px;width:1px;height:12.12px;background:#E0DCD4"></div>
<div style="left:646px;top:370.8px;width:1px;height:12.12px;background:#E0DCD4"></div>
<div style="left:686px;top:370.8px;width:1px;height:12.12px;background:#E0DCD4"></div>
<div style="left:711px;top:370.8px;width:1px;height:12.12px;background:#E0DCD4"></div>
<div style="left:735px;top:370.8px;width:1px;height:12.12px;background:#E0DCD4"></div>
<div style="left:762px;top:370.8px;width:1px;height:12.12px;background:#E0DCD4"></div>
<div style="left:818px;top:370.8px;width:1px;height:12.12px;background:#E0DCD4"></div>
<div class="cb" style="left:213px;top:372.8px;width:8px;height:8px;"></div>
<div class="t g" style="left:240.8px;top:374px;line-height:10px;font-size:8px;color:#111;">1.8</div>
<div class="t g" style="left:280.8px;top:374px;line-height:10px;font-size:8px;color:#111;">1.8.2</div>
<div class="t g" style="left:318px;top:374px;line-height:10px;font-size:8px;color:#111;"><span class="z">内六角螺栓</span>2</div>
<div class="t g" style="left:420.8px;top:374px;line-height:10px;font-size:8px;color:#111;">EA</div>
<div class="t g" style="left:445.8px;top:374px;line-height:10px;font-size:8px;color:#111;">B2</div>
<div class="t g" style="left:471px;top:374px;line-height:10px;font-size:8px;color:#111;"><span class="z">品牌</span>B</div>
<div class="t g" style="left:496px;top:374px;line-height:10px;font-size:8px;color:#111;"><span class="z">供应商</span>A2</div>
<div class="t g" style="left:363px;top:374px;line-height:10px;font-size:8px;color:#111;">16*130</div>
<div class="t g" style="left:378px;top:374px;line-height:10px;font-size:8px;color:#111;width:37px;text-align:right;">8.8<span class="z">级</span></div>
<div class="t " style="left:540px;top:374px;line-height:10px;font-size:8px;color:#111;width:40px;text-align:right;">37.2</div>
<div class="t " style="left:565px;top:374px;line-height:10px;font-size:8px;color:#111;width:40px;text-align:right;">1.2</div>
<div class="t " style="left:604px;top:374px;line-height:10px;font-size:8px;color:#111;width:40px;text-align:right;">31</div>
<div class="t " style="left:644px;top:374px;line-height:10px;font-size:8px;color:#111;width:40px;text-align:right;">12</div>
<div style="left:714px;top:371.8px;width:18px;height:9.5px;background:#8C8C8C"></div>
<div class="t " style="left:713px;top:372.8px;line-height:10px;font-size:8.2px;color:#DCDCDC;width:20px;text-align:center;">PDF</div>
<div style="left:740px;top:371.8px;width:18px;height:9.5px;background:#8C8C8C"></div>
<div class="t " style="left:737px;top:374px;line-height:10px;font-size:6.8px;color:#D8D8D8;width:24px;text-align:center;letter-spacing:-0.2px;">DWG</div>
<div style="left:782px;top:371.8px;width:18px;height:9.5px;background:#8C8C8C"></div>
<div class="t " style="left:782px;top:373.4px;line-height:10px;font-size:7.5px;color:#DCDCDC;width:18px;text-align:center;">SW</div>
<div style="left:172px;top:382.92px;width:23px;height:12.12px;background:linear-gradient(90deg,#F5F1E8,#E8E0D0);border-left:1px solid #B8AB9C;border-bottom:1px solid #BFB2A2;border-right:1px solid #C2B5A4"></div>
<div class="t s" style="left:172px;top:385.12px;line-height:10px;font-size:7.8px;color:#222;width:20px;text-align:right;">17</div>
<div style="left:195px;top:382.92px;width:623px;height:12.12px;background:#FAF0DF;border-top:1px solid #E6E2DA"></div>
<div style="left:238px;top:382.92px;width:1px;height:12.12px;background:#E0DCD4"></div>
<div style="left:278px;top:382.92px;width:1px;height:12.12px;background:#E0DCD4"></div>
<div style="left:316px;top:382.92px;width:1px;height:12.12px;background:#E0DCD4"></div>
<div style="left:360px;top:382.92px;width:1px;height:12.12px;background:#E0DCD4"></div>
<div style="left:418px;top:382.92px;width:1px;height:12.12px;background:#E0DCD4"></div>
<div style="left:443px;top:382.92px;width:1px;height:12.12px;background:#E0DCD4"></div>
<div style="left:469px;top:382.92px;width:1px;height:12.12px;background:#E0DCD4"></div>
<div style="left:494px;top:382.92px;width:1px;height:12.12px;background:#E0DCD4"></div>
<div style="left:529px;top:382.92px;width:1px;height:12.12px;background:#E0DCD4"></div>
<div style="left:582px;top:382.92px;width:1px;height:12.12px;background:#E0DCD4"></div>
<div style="left:607px;top:382.92px;width:1px;height:12.12px;background:#E0DCD4"></div>
<div style="left:646px;top:382.92px;width:1px;height:12.12px;background:#E0DCD4"></div>
<div style="left:686px;top:382.92px;width:1px;height:12.12px;background:#E0DCD4"></div>
<div style="left:711px;top:382.92px;width:1px;height:12.12px;background:#E0DCD4"></div>
<div style="left:735px;top:382.92px;width:1px;height:12.12px;background:#E0DCD4"></div>
<div style="left:762px;top:382.92px;width:1px;height:12.12px;background:#E0DCD4"></div>
<div style="left:818px;top:382.92px;width:1px;height:12.12px;background:#E0DCD4"></div>
<div class="cb" style="left:213px;top:384.92px;width:8px;height:8px;"></div>
<div class="t g" style="left:240.8px;top:386.12px;line-height:10px;font-size:8px;color:#111;">1.8</div>
<div class="t g" style="left:280.8px;top:386.12px;line-height:10px;font-size:8px;color:#111;">1.8.3</div>
<div class="t g" style="left:318px;top:386.12px;line-height:10px;font-size:8px;color:#111;"><span class="z">内六角螺栓</span>3</div>
<div class="t g" style="left:420.8px;top:386.12px;line-height:10px;font-size:8px;color:#111;">EA</div>
<div class="t g" style="left:445.8px;top:386.12px;line-height:10px;font-size:8px;color:#111;">C3</div>
<div class="t g" style="left:471px;top:386.12px;line-height:10px;font-size:8px;color:#111;"><span class="z">品牌</span>B</div>
<div class="t g" style="left:496px;top:386.12px;line-height:10px;font-size:8px;color:#111;"><span class="z">供应商</span>A3</div>
<div class="t g" style="left:363px;top:386.12px;line-height:10px;font-size:8px;color:#111;">18*120</div>
<div class="t g" style="left:374px;top:386.12px;line-height:10px;font-size:8px;color:#111;width:37px;text-align:right;">8.8<span class="z">级</span></div>
<div class="t " style="left:540px;top:386.12px;line-height:10px;font-size:8px;color:#111;width:40px;text-align:right;">38.4</div>
<div class="t " style="left:565px;top:386.12px;line-height:10px;font-size:8px;color:#111;width:40px;text-align:right;">1.2</div>
<div class="t " style="left:604px;top:386.12px;line-height:10px;font-size:8px;color:#111;width:40px;text-align:right;">32</div>
<div class="t " style="left:644px;top:386.12px;line-height:10px;font-size:8px;color:#111;width:40px;text-align:right;">12</div>
<div style="left:714px;top:383.92px;width:18px;height:9.5px;background:#8C8C8C"></div>
<div class="t " style="left:713px;top:384.92px;line-height:10px;font-size:8.2px;color:#DCDCDC;width:20px;text-align:center;">PDF</div>
<div style="left:740px;top:383.92px;width:18px;height:9.5px;background:#8C8C8C"></div>
<div class="t " style="left:737px;top:386.12px;line-height:10px;font-size:6.8px;color:#D8D8D8;width:24px;text-align:center;letter-spacing:-0.2px;">DWG</div>
<div style="left:782px;top:383.92px;width:18px;height:9.5px;background:#8C8C8C"></div>
<div class="t " style="left:782px;top:385.52px;line-height:10px;font-size:7.5px;color:#DCDCDC;width:18px;text-align:center;">SW</div>
<div style="left:172px;top:395.04px;width:23px;height:12.12px;background:linear-gradient(90deg,#F5F1E8,#E8E0D0);border-left:1px solid #B8AB9C;border-bottom:1px solid #BFB2A2;border-right:1px solid #C2B5A4"></div>
<div class="t s" style="left:172px;top:397.24px;line-height:10px;font-size:7.8px;color:#222;width:20px;text-align:right;">18</div>
<div style="left:195px;top:395.04px;width:623px;height:12.12px;background:#E0FFFF;border-top:1px solid #E6E2DA"></div>
<div style="left:238px;top:395.04px;width:1px;height:12.12px;background:#E0DCD4"></div>
<div style="left:278px;top:395.04px;width:1px;height:12.12px;background:#E0DCD4"></div>
<div style="left:316px;top:395.04px;width:1px;height:12.12px;background:#E0DCD4"></div>
<div style="left:360px;top:395.04px;width:1px;height:12.12px;background:#E0DCD4"></div>
<div style="left:418px;top:395.04px;width:1px;height:12.12px;background:#E0DCD4"></div>
<div style="left:443px;top:395.04px;width:1px;height:12.12px;background:#E0DCD4"></div>
<div style="left:469px;top:395.04px;width:1px;height:12.12px;background:#E0DCD4"></div>
<div style="left:494px;top:395.04px;width:1px;height:12.12px;background:#E0DCD4"></div>
<div style="left:529px;top:395.04px;width:1px;height:12.12px;background:#E0DCD4"></div>
<div style="left:582px;top:395.04px;width:1px;height:12.12px;background:#E0DCD4"></div>
<div style="left:607px;top:395.04px;width:1px;height:12.12px;background:#E0DCD4"></div>
<div style="left:646px;top:395.04px;width:1px;height:12.12px;background:#E0DCD4"></div>
<div style="left:686px;top:395.04px;width:1px;height:12.12px;background:#E0DCD4"></div>
<div style="left:711px;top:395.04px;width:1px;height:12.12px;background:#E0DCD4"></div>
<div style="left:735px;top:395.04px;width:1px;height:12.12px;background:#E0DCD4"></div>
<div style="left:762px;top:395.04px;width:1px;height:12.12px;background:#E0DCD4"></div>
<div style="left:818px;top:395.04px;width:1px;height:12.12px;background:#E0DCD4"></div>
<div class="cb" style="left:213px;top:397.04px;width:8px;height:8px;"></div>
<div class="t g" style="left:240.8px;top:398.24px;line-height:10px;font-size:8px;color:#111;">1.8</div>
<div class="t g" style="left:280.8px;top:398.24px;line-height:10px;font-size:8px;color:#111;">1.8.4</div>
<div class="t g" style="left:318px;top:398.24px;line-height:10px;font-size:8px;color:#111;"><span class="z">内六角螺栓</span>4</div>
<div class="t g" style="left:420.8px;top:398.24px;line-height:10px;font-size:8px;color:#111;">EA</div>
<div class="t g" style="left:445.8px;top:398.24px;line-height:10px;font-size:8px;color:#111;">D4</div>
<div class="t g" style="left:471px;top:398.24px;line-height:10px;font-size:8px;color:#111;"><span class="z">品牌</span>C</div>
<div class="t g" style="left:496px;top:398.24px;line-height:10px;font-size:8px;color:#111;"><span class="z">供应商</span>A4</div>
<div class="t g" style="left:363px;top:398.24px;line-height:10px;font-size:8px;color:#111;">20*30</div>
<div class="t g" style="left:369px;top:398.24px;line-height:10px;font-size:8px;color:#111;width:37px;text-align:right;">8.8<span class="z">级</span></div>
<div class="t " style="left:540px;top:398.24px;line-height:10px;font-size:8px;color:#111;width:40px;text-align:right;">39.6</div>
<div class="t " style="left:565px;top:398.24px;line-height:10px;font-size:8px;color:#111;width:40px;text-align:right;">1.2</div>
<div class="t " style="left:604px;top:398.24px;line-height:10px;font-size:8px;color:#111;width:40px;text-align:right;">33</div>
<div class="t " style="left:644px;top:398.24px;line-height:10px;font-size:8px;color:#111;width:40px;text-align:right;">12</div>
<div style="left:714px;top:396.04px;width:18px;height:9.5px;background:#8C8C8C"></div>
<div class="t " style="left:713px;top:397.04px;line-height:10px;font-size:8.2px;color:#DCDCDC;width:20px;text-align:center;">PDF</div>
<div style="left:740px;top:396.04px;width:18px;height:9.5px;background:#8C8C8C"></div>
<div class="t " style="left:737px;top:398.24px;line-height:10px;font-size:6.8px;color:#D8D8D8;width:24px;text-align:center;letter-spacing:-0.2px;">DWG</div>
<div style="left:782px;top:396.04px;width:18px;height:9.5px;background:#8C8C8C"></div>
<div class="t " style="left:782px;top:397.64px;line-height:10px;font-size:7.5px;color:#DCDCDC;width:18px;text-align:center;">SW</div>
<div style="left:172px;top:407.16px;width:23px;height:12.12px;background:linear-gradient(90deg,#F5F1E8,#E8E0D0);border-left:1px solid #B8AB9C;border-bottom:1px solid #BFB2A2;border-right:1px solid #C2B5A4"></div>
<div class="t s" style="left:172px;top:409.36px;line-height:10px;font-size:7.8px;color:#222;width:20px;text-align:right;">19</div>
<div style="left:195px;top:407.16px;width:623px;height:12.12px;background:#FAF0DF;border-top:1px solid #E6E2DA"></div>
<div style="left:238px;top:407.16px;width:1px;height:12.12px;background:#E0DCD4"></div>
<div style="left:278px;top:407.16px;width:1px;height:12.12px;background:#E0DCD4"></div>
<div style="left:316px;top:407.16px;width:1px;height:12.12px;background:#E0DCD4"></div>
<div style="left:360px;top:407.16px;width:1px;height:12.12px;background:#E0DCD4"></div>
<div style="left:418px;top:407.16px;width:1px;height:12.12px;background:#E0DCD4"></div>
<div style="left:443px;top:407.16px;width:1px;height:12.12px;background:#E0DCD4"></div>
<div style="left:469px;top:407.16px;width:1px;height:12.12px;background:#E0DCD4"></div>
<div style="left:494px;top:407.16px;width:1px;height:12.12px;background:#E0DCD4"></div>
<div style="left:529px;top:407.16px;width:1px;height:12.12px;background:#E0DCD4"></div>
<div style="left:582px;top:407.16px;width:1px;height:12.12px;background:#E0DCD4"></div>
<div style="left:607px;top:407.16px;width:1px;height:12.12px;background:#E0DCD4"></div>
<div style="left:646px;top:407.16px;width:1px;height:12.12px;background:#E0DCD4"></div>
<div style="left:686px;top:407.16px;width:1px;height:12.12px;background:#E0DCD4"></div>
<div style="left:711px;top:407.16px;width:1px;height:12.12px;background:#E0DCD4"></div>
<div style="left:735px;top:407.16px;width:1px;height:12.12px;background:#E0DCD4"></div>
<div style="left:762px;top:407.16px;width:1px;height:12.12px;background:#E0DCD4"></div>
<div style="left:818px;top:407.16px;width:1px;height:12.12px;background:#E0DCD4"></div>
<div class="cb" style="left:213px;top:409.16px;width:8px;height:8px;"></div>
<div class="t g" style="left:240.8px;top:410.36px;line-height:10px;font-size:8px;color:#111;">1.8</div>
<div class="t g" style="left:280.8px;top:410.36px;line-height:10px;font-size:8px;color:#111;">1.8.5</div>
<div class="t g" style="left:318px;top:410.36px;line-height:10px;font-size:8px;color:#111;"><span class="z">内六角螺栓</span>5</div>
<div class="t g" style="left:420.8px;top:410.36px;line-height:10px;font-size:8px;color:#111;">EA</div>
<div class="t g" style="left:445.8px;top:410.36px;line-height:10px;font-size:8px;color:#111;">E5</div>
<div class="t g" style="left:471px;top:410.36px;line-height:10px;font-size:8px;color:#111;"><span class="z">品牌</span>C</div>
<div class="t g" style="left:496px;top:410.36px;line-height:10px;font-size:8px;color:#111;"><span class="z">供应商</span>A5</div>
<div class="t g" style="left:363px;top:410.36px;line-height:10px;font-size:8px;color:#111;">20*40</div>
<div class="t g" style="left:373px;top:410.36px;line-height:10px;font-size:8px;color:#111;width:37px;text-align:right;">8.8<span class="z">级</span></div>
<div class="t " style="left:540px;top:410.36px;line-height:10px;font-size:8px;color:#111;width:40px;text-align:right;">40.8</div>
<div class="t " style="left:565px;top:410.36px;line-height:10px;font-size:8px;color:#111;width:40px;text-align:right;">1.2</div>
<div class="t " style="left:604px;top:410.36px;line-height:10px;font-size:8px;color:#111;width:40px;text-align:right;">34</div>
<div class="t " style="left:644px;top:410.36px;line-height:10px;font-size:8px;color:#111;width:40px;text-align:right;">12</div>
<div style="left:714px;top:408.16px;width:18px;height:9.5px;background:#8C8C8C"></div>
<div class="t " style="left:713px;top:409.16px;line-height:10px;font-size:8.2px;color:#DCDCDC;width:20px;text-align:center;">PDF</div>
<div style="left:740px;top:408.16px;width:18px;height:9.5px;background:#8C8C8C"></div>
<div class="t " style="left:737px;top:410.36px;line-height:10px;font-size:6.8px;color:#D8D8D8;width:24px;text-align:center;letter-spacing:-0.2px;">DWG</div>
<div style="left:782px;top:408.16px;width:18px;height:9.5px;background:#8C8C8C"></div>
<div class="t " style="left:782px;top:409.76px;line-height:10px;font-size:7.5px;color:#DCDCDC;width:18px;text-align:center;">SW</div>
<div style="left:172px;top:419.28px;width:23px;height:12.12px;background:linear-gradient(90deg,#F5F1E8,#E8E0D0);border-left:1px solid #B8AB9C;border-bottom:1px solid #BFB2A2;border-right:1px solid #C2B5A4"></div>
<div class="t s" style="left:172px;top:421.48px;line-height:10px;font-size:7.8px;color:#222;width:20px;text-align:right;">20</div>
<div style="left:195px;top:419.28px;width:623px;height:12.12px;background:#E0FFFF;border-top:1px solid #E6E2DA"></div>
<div style="left:238px;top:419.28px;width:1px;height:12.12px;background:#E0DCD4"></div>
<div style="left:278px;top:419.28px;width:1px;height:12.12px;background:#E0DCD4"></div>
<div style="left:316px;top:419.28px;width:1px;height:12.12px;background:#E0DCD4"></div>
<div style="left:360px;top:419.28px;width:1px;height:12.12px;background:#E0DCD4"></div>
<div style="left:418px;top:419.28px;width:1px;height:12.12px;background:#E0DCD4"></div>
<div style="left:443px;top:419.28px;width:1px;height:12.12px;background:#E0DCD4"></div>
<div style="left:469px;top:419.28px;width:1px;height:12.12px;background:#E0DCD4"></div>
<div style="left:494px;top:419.28px;width:1px;height:12.12px;background:#E0DCD4"></div>
<div style="left:529px;top:419.28px;width:1px;height:12.12px;background:#E0DCD4"></div>
<div style="left:582px;top:419.28px;width:1px;height:12.12px;background:#E0DCD4"></div>
<div style="left:607px;top:419.28px;width:1px;height:12.12px;background:#E0DCD4"></div>
<div style="left:646px;top:419.28px;width:1px;height:12.12px;background:#E0DCD4"></div>
<div style="left:686px;top:419.28px;width:1px;height:12.12px;background:#E0DCD4"></div>
<div style="left:711px;top:419.28px;width:1px;height:12.12px;background:#E0DCD4"></div>
<div style="left:735px;top:419.28px;width:1px;height:12.12px;background:#E0DCD4"></div>
<div style="left:762px;top:419.28px;width:1px;height:12.12px;background:#E0DCD4"></div>
<div style="left:818px;top:419.28px;width:1px;height:12.12px;background:#E0DCD4"></div>
<div class="cb" style="left:213px;top:421.28px;width:8px;height:8px;"></div>
<div class="t g" style="left:240.8px;top:422.48px;line-height:10px;font-size:8px;color:#111;">1.8</div>
<div class="t g" style="left:280.8px;top:422.48px;line-height:10px;font-size:8px;color:#111;">1.8.6</div>
<div class="t g" style="left:318px;top:422.48px;line-height:10px;font-size:8px;color:#111;"><span class="z">内六角螺栓</span>6</div>
<div class="t g" style="left:420.8px;top:422.48px;line-height:10px;font-size:8px;color:#111;">EA</div>
<div class="t g" style="left:445.8px;top:422.48px;line-height:10px;font-size:8px;color:#111;">F6</div>
<div class="t g" style="left:471px;top:422.48px;line-height:10px;font-size:8px;color:#111;"><span class="z">品牌</span>A</div>
<div class="t g" style="left:496px;top:422.48px;line-height:10px;font-size:8px;color:#111;"><span class="z">供应商</span>A6</div>
<div class="t g" style="left:363px;top:422.48px;line-height:10px;font-size:8px;color:#111;">20*45</div>
<div class="t g" style="left:373px;top:422.48px;line-height:10px;font-size:8px;color:#111;width:37px;text-align:right;">8.8<span class="z">级</span></div>
<div class="t " style="left:540px;top:422.48px;line-height:10px;font-size:8px;color:#111;width:40px;text-align:right;">42</div>
<div class="t " style="left:565px;top:422.48px;line-height:10px;font-size:8px;color:#111;width:40px;text-align:right;">1.2</div>
<div class="t " style="left:604px;top:422.48px;line-height:10px;font-size:8px;color:#111;width:40px;text-align:right;">35</div>
<div class="t " style="left:644px;top:422.48px;line-height:10px;font-size:8px;color:#111;width:40px;text-align:right;">12</div>
<div style="left:714px;top:420.28px;width:18px;height:9.5px;background:#8C8C8C"></div>
<div class="t " style="left:713px;top:421.28px;line-height:10px;font-size:8.2px;color:#DCDCDC;width:20px;text-align:center;">PDF</div>
<div style="left:740px;top:420.28px;width:18px;height:9.5px;background:#8C8C8C"></div>
<div class="t " style="left:737px;top:422.48px;line-height:10px;font-size:6.8px;color:#D8D8D8;width:24px;text-align:center;letter-spacing:-0.2px;">DWG</div>
<div style="left:782px;top:420.28px;width:18px;height:9.5px;background:#8C8C8C"></div>
<div class="t " style="left:782px;top:421.88px;line-height:10px;font-size:7.5px;color:#DCDCDC;width:18px;text-align:center;">SW</div>
<div style="left:172px;top:432.2px;width:692px;height:1px;background:#CFC3B3"></div>
<div style="left:854px;top:189px;width:10px;height:243px;background:linear-gradient(90deg,#F4F1EA,#ECE7DC);border-left:1px solid #E2DBCF"></div>
<div style="left:854px;top:189px;width:10px;height:10px;background:linear-gradient(#FBFAF6,#EAE4D8);border:1px solid #BFB2A2;border-radius:2px"></div>
<svg style="left:856px;top:192px" width="6" height="4" viewBox="0 0 6 4"><path d="M0.5 3.5L3 1L5.5 3.5" stroke="#777" fill="none"/></svg>
<div style="left:854px;top:200px;width:10.5px;height:152px;background:linear-gradient(90deg,#FAF8F3,#EDE8DE);border:1px solid #C6BAAA;border-radius:2px"></div>
<div style="left:857px;top:274px;width:5px;height:3.5px;background:#A89C8C"></div>
<div style="left:854px;top:423px;width:10px;height:9px;background:linear-gradient(#FBFAF6,#EAE4D8);border:1px solid #BFB2A2;border-radius:2px"></div>
<svg style="left:856px;top:426px" width="6" height="4" viewBox="0 0 6 4"><path d="M0.5 0.5L3 3L5.5 0.5" stroke="#777" fill="none"/></svg>
<script>(function(){var p=document.createElement("span");p.style.cssText="position:absolute;left:-999px;top:0;font-size:100px;white-space:nowrap;letter-spacing:0";p.textContent="\u7269\u6599";document.body.appendChild(p);var w=p.getBoundingClientRect().width;document.body.removeChild(p);if(w>180){document.body.className="cjk";}})();</script>
</body></html>
